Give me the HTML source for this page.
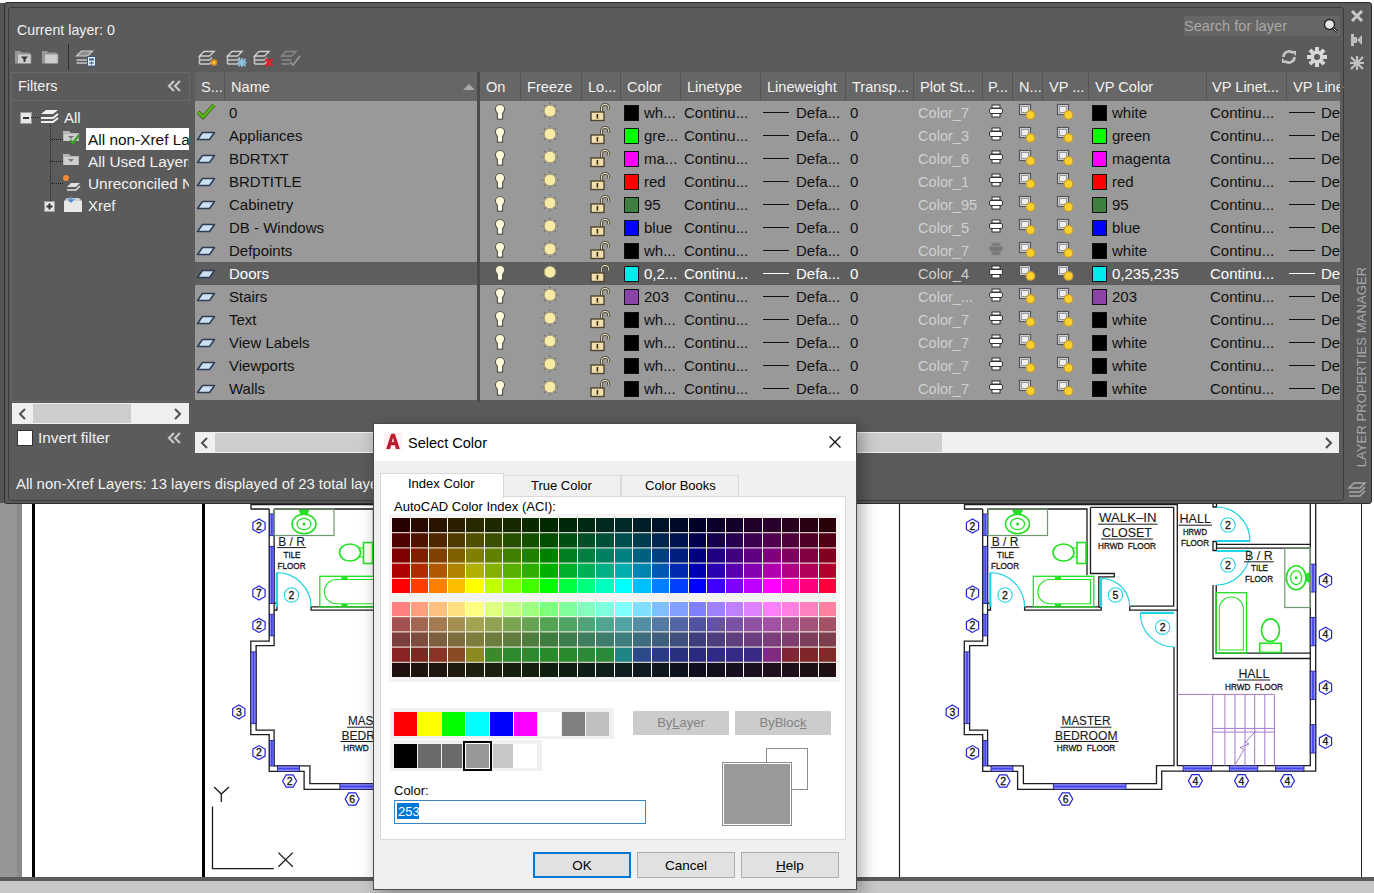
<!DOCTYPE html><html><head><meta charset="utf-8"><style>

*{margin:0;padding:0;box-sizing:border-box}
html,body{width:1374px;height:893px;overflow:hidden;background:#fff;font-family:"Liberation Sans",sans-serif}
.abs{position:absolute}
.t{position:absolute;white-space:nowrap;line-height:1}
svg{overflow:visible}

</style></head><body>
<div class="abs" style="left:0px;top:0px;width:1374px;height:893px;background:#fff;"></div>
<div class="abs" style="left:0px;top:503px;width:22px;height:377px;background:#969696;"></div>
<div class="abs" style="left:17px;top:503px;width:5px;height:377px;background:#8a8a8a;"></div>
<div class="abs" style="left:32px;top:503px;width:3px;height:377px;background:#000;"></div>
<div class="abs" style="left:202px;top:503px;width:3px;height:377px;background:#000;"></div>
<div class="abs" style="left:1361px;top:503px;width:1px;height:377px;background:#222;"></div>
<div class="abs" style="left:0px;top:3px;width:5px;height:500px;background:#555555;"></div>
<svg class="abs" style="left:0;top:0" width="1374" height="893"><defs><clipPath id="clipL"><rect x="205" y="503" width="168" height="374"/></clipPath><clipPath id="clipR"><rect x="857" y="503" width="504" height="374"/></clipPath><g id="plan"><path d="M964.5 503 V509 H982.7" fill="none" stroke="#1c1c1c" stroke-width="1.3"/><path d="M964.5 504.7 H1177.3" fill="none" stroke="#1c1c1c" stroke-width="1.3"/><path d="M982.7 509 V641.2 H964.3 V734.7 H982.7 V771.4 H1017.6 V789.4 H1161.7 V771.1 H1315.7 V503" fill="none" stroke="#1c1c1c" stroke-width="1.3"/><path d="M987.6 509 V645.7 H969.6 V730.2 H987.6 V765.9 H1023.4 V783.7 H1156.5 V765.6 H1174 V646.9" fill="none" stroke="#1c1c1c" stroke-width="1.3"/><path d="M1177.3 503 V765.6 H1310.3 V503" fill="none" stroke="#1c1c1c" stroke-width="1.3"/><path d="M987.6 509 H1087 V575.3" fill="none" stroke="#1c1c1c" stroke-width="1.3"/><path d="M1090.5 507.4 V573.5 H1114.3 V576.9 H1098.8 V607 H1101.2 V610.2 H1024.6 V606.9 H1098.8" fill="none" stroke="#1c1c1c" stroke-width="1.3"/><path d="M1090.5 507.4 H1173.7 V606.2 H1129.7 V610.2 H1177.3" fill="none" stroke="#1c1c1c" stroke-width="1.3"/><path d="M987.6 603 H990.5 V610 H987.6" fill="none" stroke="#1c1c1c" stroke-width="1.3"/><path d="M1213 503 V507 H1216.5 V503" fill="none" stroke="#1c1c1c" stroke-width="1.3"/><path d="M1213 541.5 H1216.5 V550.5 H1213 Z" fill="none" stroke="#1c1c1c" stroke-width="1.3"/><path d="M1216.5 544.4 H1310.3 M1216.5 548.1 H1310.3" fill="none" stroke="#1c1c1c" stroke-width="1.3"/><path d="M1213 585 V658.5 H1310.3 M1216.2 585 V653.1 H1310.3" fill="none" stroke="#1c1c1c" stroke-width="1.3"/><rect x="983" y="514" width="4.6" height="21.6" fill="#8f8ffc" stroke="#24246a" stroke-width="1"/><path d="M985.3 514 V535.6" stroke="#4545ee" stroke-width="1.8"/><rect x="983" y="546.4" width="4.6" height="57.1" fill="#8f8ffc" stroke="#24246a" stroke-width="1"/><path d="M985.3 546.4 V603.5" stroke="#4545ee" stroke-width="1.8"/><rect x="983" y="614.3" width="4.6" height="21.5" fill="#8f8ffc" stroke="#24246a" stroke-width="1"/><path d="M985.3 614.3 V635.8" stroke="#4545ee" stroke-width="1.8"/><rect x="983" y="740.6" width="4.6" height="25.3" fill="#8f8ffc" stroke="#24246a" stroke-width="1"/><path d="M985.3 740.6 V765.9" stroke="#4545ee" stroke-width="1.8"/><rect x="964.3" y="651.9" width="5.3" height="71.7" fill="#8f8ffc" stroke="#24246a" stroke-width="1"/><path d="M967.0 651.9 V723.6" stroke="#4545ee" stroke-width="1.8"/><rect x="991" y="765.9" width="21.9" height="5.5" fill="#8f8ffc" stroke="#24246a" stroke-width="1"/><path d="M991 768.6 H1012.9" stroke="#4545ee" stroke-width="1.8"/><rect x="1053.4" y="783.7" width="72.5" height="5.7" fill="#8f8ffc" stroke="#24246a" stroke-width="1"/><path d="M1053.4 786.5 H1125.9" stroke="#4545ee" stroke-width="1.8"/><rect x="1183.2" y="765.6" width="28.3" height="5.5" fill="#8f8ffc" stroke="#24246a" stroke-width="1"/><path d="M1183.2 768.4 H1211.5" stroke="#4545ee" stroke-width="1.8"/><rect x="1229.4" y="765.6" width="28.3" height="5.5" fill="#8f8ffc" stroke="#24246a" stroke-width="1"/><path d="M1229.4 768.4 H1257.7" stroke="#4545ee" stroke-width="1.8"/><rect x="1275.6" y="765.6" width="28.3" height="5.5" fill="#8f8ffc" stroke="#24246a" stroke-width="1"/><path d="M1275.6 768.4 H1303.9" stroke="#4545ee" stroke-width="1.8"/><rect x="1310.3" y="564.2" width="5.4" height="27.8" fill="#8f8ffc" stroke="#24246a" stroke-width="1"/><path d="M1313.0 564.2 V592" stroke="#4545ee" stroke-width="1.8"/><rect x="1310.3" y="617.5" width="5.4" height="28.2" fill="#8f8ffc" stroke="#24246a" stroke-width="1"/><path d="M1313.0 617.5 V645.7" stroke="#4545ee" stroke-width="1.8"/><rect x="1310.3" y="671.2" width="5.4" height="28.3" fill="#8f8ffc" stroke="#24246a" stroke-width="1"/><path d="M1313.0 671.2 V699.5" stroke="#4545ee" stroke-width="1.8"/><rect x="1310.3" y="724.7" width="5.4" height="28.3" fill="#8f8ffc" stroke="#24246a" stroke-width="1"/><path d="M1313.0 724.7 V753" stroke="#4545ee" stroke-width="1.8"/><path d="M990.3 572.7 V607" fill="none" stroke="#22d3e6" stroke-width="2.2"/><path d="M990.3 572.7 A34.3 34.3 0 0 1 1024.6 607" fill="none" stroke="#22d3e6" stroke-width="1.2"/><path d="M1101 578.3 V607" fill="none" stroke="#22d3e6" stroke-width="2.2"/><path d="M1101 578.3 A28.7 28.7 0 0 1 1129.7 607" fill="none" stroke="#22d3e6" stroke-width="1.2"/><path d="M1140.3 612.9 H1174" fill="none" stroke="#22d3e6" stroke-width="2.2"/><path d="M1140.3 612.9 A33.7 34 0 0 0 1174 646.9" fill="none" stroke="#22d3e6" stroke-width="1.2"/><path d="M1216.5 541 H1250" fill="none" stroke="#22d3e6" stroke-width="2.2"/><path d="M1216.5 507 A33.5 34 0 0 1 1250 541" fill="none" stroke="#22d3e6" stroke-width="1.2"/><path d="M1216.5 551 H1250" fill="none" stroke="#22d3e6" stroke-width="2.2"/><path d="M1250 551 A33.5 34 0 0 1 1216.5 585" fill="none" stroke="#22d3e6" stroke-width="1.2"/><circle cx="1005" cy="595" r="7.2" fill="none" stroke="#22d3e6" stroke-width="1.1"/><text x="1005" y="598.8" font-size="10.5" text-anchor="middle" fill="#111" stroke="#111" stroke-width="0.3">2</text><circle cx="1115.5" cy="595" r="7.2" fill="none" stroke="#22d3e6" stroke-width="1.1"/><text x="1115.5" y="598.8" font-size="10.5" text-anchor="middle" fill="#111" stroke="#111" stroke-width="0.3">5</text><circle cx="1228" cy="525" r="7.2" fill="none" stroke="#22d3e6" stroke-width="1.1"/><text x="1228" y="528.8" font-size="10.5" text-anchor="middle" fill="#111" stroke="#111" stroke-width="0.3">2</text><circle cx="1228" cy="565" r="7.2" fill="none" stroke="#22d3e6" stroke-width="1.1"/><text x="1228" y="568.8" font-size="10.5" text-anchor="middle" fill="#111" stroke="#111" stroke-width="0.3">2</text><circle cx="1162.7" cy="627.2" r="7.2" fill="none" stroke="#22d3e6" stroke-width="1.1"/><text x="1162.7" y="631.0" font-size="10.5" text-anchor="middle" fill="#111" stroke="#111" stroke-width="0.3">2</text><polygon points="972.5,533.0 966.4,529.5 966.4,522.5 972.5,519.0 978.6,522.5 978.6,529.5" fill="none" stroke="#2424d8" stroke-width="1.2"/><text x="972.5" y="529.8" font-size="10.5" text-anchor="middle" fill="#111" stroke="#111" stroke-width="0.3">2</text><polygon points="972.5,600.0 966.4,596.5 966.4,589.5 972.5,586.0 978.6,589.5 978.6,596.5" fill="none" stroke="#2424d8" stroke-width="1.2"/><text x="972.5" y="596.8" font-size="10.5" text-anchor="middle" fill="#111" stroke="#111" stroke-width="0.3">7</text><polygon points="972.5,632.4 966.4,628.9 966.4,621.9 972.5,618.4 978.6,621.9 978.6,628.9" fill="none" stroke="#2424d8" stroke-width="1.2"/><text x="972.5" y="629.1999999999999" font-size="10.5" text-anchor="middle" fill="#111" stroke="#111" stroke-width="0.3">2</text><polygon points="952.3,719.0 946.2,715.5 946.2,708.5 952.3,705.0 958.4,708.5 958.4,715.5" fill="none" stroke="#2424d8" stroke-width="1.2"/><text x="952.3" y="715.8" font-size="10.5" text-anchor="middle" fill="#111" stroke="#111" stroke-width="0.3">3</text><polygon points="972.5,759.6 966.4,756.1 966.4,749.1 972.5,745.6 978.6,749.1 978.6,756.1" fill="none" stroke="#2424d8" stroke-width="1.2"/><text x="972.5" y="756.4" font-size="10.5" text-anchor="middle" fill="#111" stroke="#111" stroke-width="0.3">2</text><polygon points="1325.5,587.4 1319.4,583.9 1319.4,576.9 1325.5,573.4 1331.6,576.9 1331.6,583.9" fill="none" stroke="#2424d8" stroke-width="1.2"/><text x="1325.5" y="584.1999999999999" font-size="10.5" text-anchor="middle" fill="#111" stroke="#111" stroke-width="0.3">4</text><polygon points="1325.5,641.3 1319.4,637.8 1319.4,630.8 1325.5,627.3 1331.6,630.8 1331.6,637.8" fill="none" stroke="#2424d8" stroke-width="1.2"/><text x="1325.5" y="638.0999999999999" font-size="10.5" text-anchor="middle" fill="#111" stroke="#111" stroke-width="0.3">4</text><polygon points="1325.5,694.4 1319.4,690.9 1319.4,683.9 1325.5,680.4 1331.6,683.9 1331.6,690.9" fill="none" stroke="#2424d8" stroke-width="1.2"/><text x="1325.5" y="691.1999999999999" font-size="10.5" text-anchor="middle" fill="#111" stroke="#111" stroke-width="0.3">4</text><polygon points="1325.5,748.4 1319.4,744.9 1319.4,737.9 1325.5,734.4 1331.6,737.9 1331.6,744.9" fill="none" stroke="#2424d8" stroke-width="1.2"/><text x="1325.5" y="745.1999999999999" font-size="10.5" text-anchor="middle" fill="#111" stroke="#111" stroke-width="0.3">4</text><polygon points="1010.1,781.0 1006.6,787.1 999.6,787.1 996.1,781.0 999.6,774.9 1006.6,774.9" fill="none" stroke="#2424d8" stroke-width="1.2"/><text x="1003.1" y="784.8" font-size="10.5" text-anchor="middle" fill="#111" stroke="#111" stroke-width="0.3">2</text><polygon points="1072.7,799.0 1069.2,805.1 1062.2,805.1 1058.7,799.0 1062.2,792.9 1069.2,792.9" fill="none" stroke="#2424d8" stroke-width="1.2"/><text x="1065.7" y="802.8" font-size="10.5" text-anchor="middle" fill="#111" stroke="#111" stroke-width="0.3">6</text><polygon points="1202.4,780.8 1198.9,786.9 1191.9,786.9 1188.4,780.8 1191.9,774.7 1198.9,774.7" fill="none" stroke="#2424d8" stroke-width="1.2"/><text x="1195.4" y="784.5999999999999" font-size="10.5" text-anchor="middle" fill="#111" stroke="#111" stroke-width="0.3">4</text><polygon points="1248.5,780.8 1245.0,786.9 1238.0,786.9 1234.5,780.8 1238.0,774.7 1245.0,774.7" fill="none" stroke="#2424d8" stroke-width="1.2"/><text x="1241.5" y="784.5999999999999" font-size="10.5" text-anchor="middle" fill="#111" stroke="#111" stroke-width="0.3">4</text><polygon points="1294.5,780.8 1291.0,786.9 1284.0,786.9 1280.5,780.8 1284.0,774.7 1291.0,774.7" fill="none" stroke="#2424d8" stroke-width="1.2"/><text x="1287.5" y="784.5999999999999" font-size="10.5" text-anchor="middle" fill="#111" stroke="#111" stroke-width="0.3">4</text><rect x="988" y="509" width="59.5" height="26.5" fill="none" stroke="#6f9a6f" stroke-width="1.2"/><ellipse cx="1017.5" cy="524" rx="12" ry="9.8" fill="none" stroke="#22e022" stroke-width="1.6"/><ellipse cx="1017.5" cy="524" rx="7" ry="5.6" fill="none" stroke="#22e022" stroke-width="1.2"/><circle cx="1017.5" cy="524" r="1.5" fill="#22e022"/><path d="M1012 510 h11 l-2 4 h-7z" fill="#22e022"/><ellipse cx="1063.5" cy="552.5" rx="10.5" ry="8.5" fill="none" stroke="#22e022" stroke-width="1.6"/><path d="M1072 548 h5 M1072 557 h5" stroke="#22e022" stroke-width="1.2"/><rect x="1077" y="542.5" width="9" height="21" fill="none" stroke="#22e022" stroke-width="1.6"/><rect x="1033.3" y="576.3" width="60.5" height="30.6" fill="none" stroke="#22e022" stroke-width="1.3"/><path d="M1050 579.5 H1090.5 V603.8 H1050 A12.15 12.15 0 0 1 1050 579.5Z" fill="none" stroke="#22e022" stroke-width="1.1"/><path d="M1055 578 h6 M1055 605 h6" stroke="#22e022" stroke-width="2"/><rect x="1284.8" y="548" width="25.5" height="59.5" fill="none" stroke="#6f9a6f" stroke-width="1.2"/><ellipse cx="1296.2" cy="577.7" rx="9.8" ry="12" fill="none" stroke="#22e022" stroke-width="1.6"/><ellipse cx="1296.2" cy="577.7" rx="5.6" ry="7" fill="none" stroke="#22e022" stroke-width="1.2"/><circle cx="1296.2" cy="577.7" r="1.5" fill="#22e022"/><path d="M1309.5 572 v11 l-4 -2 v-7z" fill="#22e022"/><rect x="1216.2" y="592.7" width="30.3" height="60.4" fill="none" stroke="#22e022" stroke-width="1.3"/><path d="M1219.3 650 V609 A12.05 12.05 0 0 1 1243.4 609 V650Z" fill="none" stroke="#22e022" stroke-width="1.1"/><ellipse cx="1270.5" cy="630.2" rx="9" ry="11.3" fill="none" stroke="#22e022" stroke-width="1.6"/><rect x="1259.7" y="643.3" width="21.5" height="9.1" fill="none" stroke="#22e022" stroke-width="1.6"/><path d="M1177.3 694.4 H1274.4" fill="none" stroke="#a678c8" stroke-width="1"/><path d="M1212.7 694.4 V765.6" fill="none" stroke="#a678c8" stroke-width="1"/><path d="M1224.9 694.4 V765.6" fill="none" stroke="#a678c8" stroke-width="1"/><path d="M1235 694.4 V765.6" fill="none" stroke="#a678c8" stroke-width="1"/><path d="M1245 694.4 V765.6" fill="none" stroke="#a678c8" stroke-width="1"/><path d="M1254.7 694.4 V765.6" fill="none" stroke="#a678c8" stroke-width="1"/><path d="M1264.8 694.4 V765.6" fill="none" stroke="#a678c8" stroke-width="1"/><path d="M1274.4 694.4 V765.6" fill="none" stroke="#a678c8" stroke-width="1"/><path d="M1212.7 728.4 H1274.4 M1212.7 732.1 H1274.4" fill="none" stroke="#a678c8" stroke-width="1"/><path d="M1234.6 765.6 L1244 749.5 L1240 747.5 L1249 744 L1245.5 742 L1256.2 730.6" fill="none" stroke="#a678c8" stroke-width="1"/><text x="991.7" y="545.7" font-size="12.5" textLength="26.8" lengthAdjust="spacingAndGlyphs" fill="#1a1a1a" stroke="#1a1a1a" stroke-width="0.1">B / R</text><line x1="990.7" y1="547.6" x2="1019.5" y2="547.6" stroke="#1a1a1a" stroke-width="1"/><text x="997" y="557.8" font-size="9.8" textLength="17.0" lengthAdjust="spacingAndGlyphs" fill="#1a1a1a" stroke="#1a1a1a" stroke-width="0.35">TILE</text><text x="991" y="568.5" font-size="9.8" textLength="28.0" lengthAdjust="spacingAndGlyphs" fill="#1a1a1a" stroke="#1a1a1a" stroke-width="0.35">FLOOR</text><text x="1099" y="522.2" font-size="12.5" textLength="57.6" lengthAdjust="spacingAndGlyphs" fill="#1a1a1a" stroke="#1a1a1a" stroke-width="0.1">WALK–IN</text><line x1="1098" y1="524.2" x2="1157.6" y2="524.2" stroke="#1a1a1a" stroke-width="1"/><text x="1102" y="537" font-size="12.5" textLength="50.0" lengthAdjust="spacingAndGlyphs" fill="#1a1a1a" stroke="#1a1a1a" stroke-width="0.1">CLOSET</text><line x1="1101" y1="539" x2="1153" y2="539" stroke="#1a1a1a" stroke-width="1"/><text x="1098" y="548.7" font-size="9.8" textLength="58.0" lengthAdjust="spacingAndGlyphs" fill="#1a1a1a" stroke="#1a1a1a" stroke-width="0.35">HRWD&#160;&#160;FLOOR</text><text x="1179.5" y="523.4" font-size="12.5" textLength="31.5" lengthAdjust="spacingAndGlyphs" fill="#1a1a1a" stroke="#1a1a1a" stroke-width="0.1">HALL</text><line x1="1178.5" y1="525.2" x2="1212" y2="525.2" stroke="#1a1a1a" stroke-width="1"/><text x="1183" y="534.7" font-size="9.8" textLength="24.0" lengthAdjust="spacingAndGlyphs" fill="#1a1a1a" stroke="#1a1a1a" stroke-width="0.35">HRWD</text><text x="1181" y="545.7" font-size="9.8" textLength="28.0" lengthAdjust="spacingAndGlyphs" fill="#1a1a1a" stroke="#1a1a1a" stroke-width="0.35">FLOOR</text><text x="1245" y="559.8" font-size="12.5" textLength="27.7" lengthAdjust="spacingAndGlyphs" fill="#1a1a1a" stroke="#1a1a1a" stroke-width="0.1">B / R</text><line x1="1244" y1="561.8" x2="1273.7" y2="561.8" stroke="#1a1a1a" stroke-width="1"/><text x="1251" y="571.2" font-size="9.8" textLength="17.0" lengthAdjust="spacingAndGlyphs" fill="#1a1a1a" stroke="#1a1a1a" stroke-width="0.35">TILE</text><text x="1245" y="582.3" font-size="9.8" textLength="28.0" lengthAdjust="spacingAndGlyphs" fill="#1a1a1a" stroke="#1a1a1a" stroke-width="0.35">FLOOR</text><text x="1238.4" y="678" font-size="12.5" textLength="30.9" lengthAdjust="spacingAndGlyphs" fill="#1a1a1a" stroke="#1a1a1a" stroke-width="0.1">HALL</text><line x1="1237.4" y1="680" x2="1270.3" y2="680" stroke="#1a1a1a" stroke-width="1"/><text x="1225" y="689.8" font-size="9.8" textLength="58.0" lengthAdjust="spacingAndGlyphs" fill="#1a1a1a" stroke="#1a1a1a" stroke-width="0.35">HRWD&#160;&#160;FLOOR</text><text x="1061.5" y="725.4" font-size="12.5" textLength="48.9" lengthAdjust="spacingAndGlyphs" fill="#1a1a1a" stroke="#1a1a1a" stroke-width="0.1">MASTER</text><line x1="1060.5" y1="727.2" x2="1111.4" y2="727.2" stroke="#1a1a1a" stroke-width="1"/><text x="1054.9" y="739.7" font-size="12.5" textLength="62.7" lengthAdjust="spacingAndGlyphs" fill="#1a1a1a" stroke="#1a1a1a" stroke-width="0.1">BEDROOM</text><line x1="1053.9" y1="741.5" x2="1118.6" y2="741.5" stroke="#1a1a1a" stroke-width="1"/><text x="1056.7" y="751.3" font-size="9.8" textLength="58.6" lengthAdjust="spacingAndGlyphs" fill="#1a1a1a" stroke="#1a1a1a" stroke-width="0.35">HRWD&#160;&#160;FLOOR</text></g></defs><g clip-path="url(#clipR)"><use href="#plan"/></g><g clip-path="url(#clipL)"><use href="#plan" transform="translate(-713.5 0)"/></g><path d="M899.5 503 V877" stroke="#222" stroke-width="1.2"/><path d="M212.5 806.6 V868.6 H273.7" fill="none" stroke="#1a1a1a" stroke-width="1.3"/><path d="M214.1 787 L221.3 794 L229 787 M221.3 794 V801.9" fill="none" stroke="#1a1a1a" stroke-width="1.3"/><path d="M278.4 852.6 L292.8 866.7 M292.8 852.6 L278.4 866.7" fill="none" stroke="#1a1a1a" stroke-width="1.3"/></svg>
<div class="abs" style="left:0px;top:877px;width:1374px;height:4px;background:#5a5a5a;"></div>
<div class="abs" style="left:0px;top:881px;width:1374px;height:12px;background:#c8c8c8;"></div>
<div class="abs" style="left:4px;top:2px;width:1368px;height:502px;background:#5a5a5a;border:1px solid #2e2e2e;border-radius:3px"></div>
<div class="abs" style="left:8px;top:7px;width:1336px;height:494px;background:#5b5b5b;border:1px solid #3a3a3a;border-radius:3px"></div>
<div class="t" style="left:17px;top:23.1px;font-size:14.2px;color:#f2f2f2;">Current layer: 0</div>
<div class="abs" style="left:1184px;top:16px;width:156px;height:20px;background:#666666;"></div>
<div class="t" style="left:1184px;top:18.8px;font-size:14.6px;color:#a8a8a8;">Search for layer</div>
<svg class="abs" style="left:1323px;top:18px;" width="16" height="16" viewBox="0 0 16 16"><circle cx="6.5" cy="6.5" r="5" fill="#e8e8e8" stroke="#222" stroke-width="1.3"/><line x1="10" y1="10" x2="14" y2="14" stroke="#222" stroke-width="2.5"/><line x1="10.5" y1="10.5" x2="13.5" y2="13.5" stroke="#ddd" stroke-width="1"/></svg>
<svg class="abs" style="left:14px;top:49px;" width="20" height="16" viewBox="0 0 20 16"><path d="M1 2 h5 l1.5 1.5 h8 v11 h-14.5z" fill="#9a9a9a"/><path d="M3.5 5 h13.5 v9.5 h-13.5z" fill="#cdcdcd" stroke="#8a8a8a" stroke-width="0.8"/><path d="M7 7.5 h7 l-2.5 3 v2.5 h-2 v-2.5z" fill="#3a3a3a"/></svg>
<svg class="abs" style="left:41px;top:49px;" width="20" height="16" viewBox="0 0 20 16"><path d="M1 2 h5 l1.5 1.5 h8 v11 h-14.5z" fill="#9a9a9a"/><path d="M3.5 5 h13.5 v9.5 h-13.5z" fill="#cdcdcd" stroke="#8a8a8a" stroke-width="0.8"/></svg>
<div class="abs" style="left:68px;top:44px;width:1px;height:26px;background:#2e2e2e;"></div>
<svg class="abs" style="left:75px;top:49px;" width="22" height="18" viewBox="0 0 22 18"><path d="M1.5 7 l5 -5 h11 l-5 5z" fill="#8a8a8a" stroke="#cfcfcf" stroke-width="1.2"/><path d="M1.5 11 h11 l4 -4 M1.5 14 h11" fill="none" stroke="#c8c8c8" stroke-width="1.4"/><rect x="12.5" y="7.5" width="8" height="9.5" fill="#e8eef6" stroke="#3a5a8a" stroke-width="1"/><rect x="14" y="9.5" width="5" height="2" fill="#3a5a8a"/><path d="M14 14 h5 M16.5 12.5 v3" stroke="#3a5a8a" stroke-width="1"/></svg>
<svg class="abs" style="left:198px;top:50px;" width="22" height="18" viewBox="0 0 22 18"><path d="M1.5 6 l4.5 -4.5 h10 l-4.5 4.5z" fill="#4f4f4f" stroke="#d0d0d0" stroke-width="1.4"/><path d="M1.5 6 v8 M1.5 10 h10 l2.5 -2.5 M1.5 14 h10 l2.5 -2.5" fill="none" stroke="#c8c8c8" stroke-width="1.5"/><circle cx="16" cy="12.5" r="3.2" fill="#e88a20"/><circle cx="16" cy="12.5" r="1.5" fill="#ffd040"/></svg>
<svg class="abs" style="left:226px;top:50px;" width="22" height="18" viewBox="0 0 22 18"><path d="M1.5 6 l4.5 -4.5 h10 l-4.5 4.5z" fill="#4f4f4f" stroke="#d0d0d0" stroke-width="1.4"/><path d="M1.5 6 v8 M1.5 10 h10 l2.5 -2.5 M1.5 14 h10 l2.5 -2.5" fill="none" stroke="#c8c8c8" stroke-width="1.5"/><path d="M12.5 9 l7 7 M19.5 9 l-7 7 M16 8 v9 M11.5 12.5 h9" stroke="#8cc0dc" stroke-width="1.8"/></svg>
<svg class="abs" style="left:253px;top:50px;" width="22" height="18" viewBox="0 0 22 18"><path d="M1.5 6 l4.5 -4.5 h10 l-4.5 4.5z" fill="#4f4f4f" stroke="#d0d0d0" stroke-width="1.4"/><path d="M1.5 6 v8 M1.5 10 h10 l2.5 -2.5 M1.5 14 h10 l2.5 -2.5" fill="none" stroke="#c8c8c8" stroke-width="1.5"/><path d="M12.5 9 l7 7 M19.5 9 l-7 7" stroke="#e82030" stroke-width="2.6"/></svg>
<svg class="abs" style="left:280px;top:50px;" width="22" height="18" viewBox="0 0 22 18"><path d="M1.5 6 l4.5 -4.5 h10 l-4.5 4.5z M1.5 10 h10 M1.5 14 h8" fill="none" stroke="#8a8a8a" stroke-width="1.3"/><path d="M10 12 l3 3 l7 -9" fill="none" stroke="#9a9a9a" stroke-width="1.6"/></svg>
<svg class="abs" style="left:1280px;top:48px;" width="18" height="18" viewBox="0 0 18 18"><path d="M3.5 9 a5.5 5.5 0 0 1 9.5 -3.8" fill="none" stroke="#c4c4c4" stroke-width="2.6"/><path d="M14.5 9 a5.5 5.5 0 0 1 -9.5 3.8" fill="none" stroke="#c4c4c4" stroke-width="2.6"/><path d="M11 3 h5 v5z" fill="#c4c4c4"/><path d="M7 15 h-5 v-5z" fill="#c4c4c4"/></svg>
<svg class="abs" style="left:1307px;top:47px;" width="20" height="20" viewBox="0 0 20 20"><rect x="8" y="0" width="4" height="20" fill="#d8d8d8" transform="rotate(0 10 10)"/><rect x="8" y="0" width="4" height="20" fill="#d8d8d8" transform="rotate(45 10 10)"/><rect x="8" y="0" width="4" height="20" fill="#d8d8d8" transform="rotate(90 10 10)"/><rect x="8" y="0" width="4" height="20" fill="#d8d8d8" transform="rotate(135 10 10)"/><circle cx="10" cy="10" r="6.5" fill="#d8d8d8"/><circle cx="10" cy="10" r="3" fill="#5b5b5b"/></svg>
<svg class="abs" style="left:1350px;top:9px;" width="14" height="14" viewBox="0 0 14 14"><path d="M2 2 L12 12 M12 2 L2 12" stroke="#c8c8c8" stroke-width="3"/></svg>
<svg class="abs" style="left:1351px;top:33px;" width="12" height="14" viewBox="0 0 12 14"><rect x="0" y="1" width="3" height="12" fill="#bdbdbd"/><rect x="3" y="4" width="3" height="6" fill="#bdbdbd"/><path d="M11 2 v10 l-5 -5z" fill="#bdbdbd"/></svg>
<svg class="abs" style="left:1350px;top:56px;" width="14" height="14" viewBox="0 0 14 14"><path d="M1 1 L13 13 M13 1 L1 13 M7 0 V14 M0 7 H14" stroke="#c0c0c0" stroke-width="2.2"/><circle cx="7" cy="7" r="3" fill="#c0c0c0"/></svg>
<div class="t" style="left:1361px;top:367px;font-size:13px;color:#a9a9a9;transform:translate(-50%,-50%) rotate(-90deg);letter-spacing:0.1px">LAYER PROPERTIES MANAGER</div>
<svg class="abs" style="left:1347px;top:481px;" width="20" height="18" viewBox="0 0 20 18"><path d="M2 7 l5 -5 h11 l-5 5z" fill="none" stroke="#a8a8a8" stroke-width="1.5"/><path d="M2 11 h11 l5 -5" fill="none" stroke="#a8a8a8" stroke-width="1.5"/><path d="M2 15 h11 l5 -5" fill="none" stroke="#a8a8a8" stroke-width="1.5"/></svg>
<div class="abs" style="left:11px;top:72px;width:179px;height:29px;background:transparent;border:1px solid #686868"></div>
<div class="t" style="left:18px;top:78.9px;font-size:14.5px;color:#f2f2f2;">Filters</div>
<svg class="abs" style="left:168px;top:80px;" width="14" height="12" viewBox="0 0 14 12"><path d="M6 1 L1 6 L6 11 M12 1 L7 6 L12 11" fill="none" stroke="#c8c8c8" stroke-width="2.2"/></svg>
<div class="abs" style="left:11px;top:100px;width:179px;height:302px;background:transparent;border:1px solid #686868"></div>
<svg class="abs" style="left:20px;top:112px;" width="12" height="12" viewBox="0 0 12 12"><rect x="0.5" y="0.5" width="11" height="11" fill="#e6e6e6" stroke="#9a9a9a"/><rect x="3" y="5" width="6" height="2" fill="#333"/></svg>
<div class="abs" style="left:31px;top:117px;width:9px;border-top:1px dotted #222"></div>
<svg class="abs" style="left:40px;top:109px;" width="19" height="16" viewBox="0 0 19 16"><path d="M1 5 l5 -4 h12 l-5 4z" fill="#f0f0f0"/><path d="M1 9 h12 l5 -4" fill="none" stroke="#f0f0f0" stroke-width="2"/><path d="M1 13 h12 l5 -4" fill="none" stroke="#f0f0f0" stroke-width="2"/></svg>
<div class="t" style="left:64px;top:110.4px;font-size:15px;color:#f2f2f2;">All</div>
<div class="abs" style="left:50px;top:125px;height:82px;border-left:1px dotted #222"></div>
<div class="abs" style="left:51px;top:139px;width:12px;border-top:1px dotted #222"></div>
<div class="abs" style="left:51px;top:161px;width:12px;border-top:1px dotted #222"></div>
<div class="abs" style="left:51px;top:183px;width:12px;border-top:1px dotted #222"></div>
<svg class="abs" style="left:62px;top:128px;" width="20" height="18" viewBox="0 0 20 18"><path d="M1 3 h6 l2 2 h8 v8 h-16z" fill="#b5b5b5"/><path d="M2 6 h14 v7 h-14z" fill="#cfcfcf"/><path d="M6 8 h6 l-3 3z" fill="#777"/><path d="M8 12 l3 3 l6 -8" fill="none" stroke="#3fa028" stroke-width="2.4"/></svg>
<div class="abs" style="left:86px;top:128px;width:103px;height:22px;background:#fff;overflow:hidden"><div class="t" style="left:2px;top:4.4px;font-size:15.4px;color:#111">All non-Xref Layers</div></div>
<svg class="abs" style="left:62px;top:151px;" width="20" height="16" viewBox="0 0 20 16"><path d="M1 3 h6 l2 2 h8 v9 h-16z" fill="#b5b5b5"/><path d="M2 6 h14 v8 h-14z" fill="#cfcfcf"/><path d="M6 8 h6 l-3 3z" fill="#777"/></svg>
<div class="abs" style="left:86px;top:150px;width:103px;height:22px;overflow:hidden"><div class="t" style="left:2px;top:4.4px;font-size:15.4px;color:#f2f2f2">All Used Layers</div></div>
<svg class="abs" style="left:62px;top:174px;" width="20" height="18" viewBox="0 0 20 18"><circle cx="4" cy="4" r="3" fill="#f08a30"/><path d="M5 13 l4 -4 h9 l-4 4z" fill="#e0e0e0"/><path d="M5 16 h9 l4 -4" fill="none" stroke="#e0e0e0" stroke-width="1.5"/></svg>
<div class="abs" style="left:86px;top:172px;width:103px;height:22px;overflow:hidden"><div class="t" style="left:2px;top:4.4px;font-size:15.4px;color:#f2f2f2">Unreconciled New Layers</div></div>
<svg class="abs" style="left:44px;top:201px;" width="12" height="12" viewBox="0 0 12 12"><rect x="0.5" y="0.5" width="10" height="10" fill="#e6e6e6" stroke="#9a9a9a"/><rect x="2.5" y="4.5" width="6" height="2" fill="#333"/><rect x="4.5" y="2.5" width="2" height="6" fill="#333"/></svg>
<svg class="abs" style="left:63px;top:195px;" width="20" height="18" viewBox="0 0 20 18"><path d="M1 6 h18 v11 h-18z" fill="#e8e8e8"/><path d="M1 6 l3 -3 h12 l3 3" fill="#cfcfcf"/><path d="M8 1 v6 M5 4 l3 3 l3 -3" fill="none" stroke="#4a8ad0" stroke-width="1.5"/></svg>
<div class="t" style="left:88px;top:198.4px;font-size:15px;color:#f2f2f2;">Xref</div>
<div class="abs" style="left:189px;top:101px;width:6px;height:330px;background:#5b5b5b;"></div>
<div class="abs" style="left:12px;top:403px;width:177px;height:21px;background:#f0f0f0;"></div>
<div class="abs" style="left:33px;top:404px;width:98px;height:19px;background:#cdcdcd;"></div>
<svg class="abs" style="left:17px;top:408px;" width="10" height="12" viewBox="0 0 10 12"><path d="M8 1 L3 6 L8 11" fill="none" stroke="#505050" stroke-width="2"/></svg>
<svg class="abs" style="left:173px;top:408px;" width="10" height="12" viewBox="0 0 10 12"><path d="M2 1 L7 6 L2 11" fill="none" stroke="#505050" stroke-width="2"/></svg>
<div class="abs" style="left:17px;top:430px;width:16px;height:16px;background:#ffffff;border:1px solid #333"></div>
<div class="t" style="left:38px;top:430.1px;font-size:15.4px;color:#f2f2f2;">Invert filter</div>
<svg class="abs" style="left:168px;top:432px;" width="14" height="12" viewBox="0 0 14 12"><path d="M6 1 L1 6 L6 11 M12 1 L7 6 L12 11" fill="none" stroke="#c8c8c8" stroke-width="2.2"/></svg>
<div class="abs" style="left:195px;top:72px;width:1145px;height:29px;background:#666666;"></div>
<div class="abs" style="left:224px;top:72px;width:1px;height:29px;background:#545454;"></div>
<div class="abs" style="left:520px;top:72px;width:1px;height:29px;background:#545454;"></div>
<div class="abs" style="left:581px;top:72px;width:1px;height:29px;background:#545454;"></div>
<div class="abs" style="left:620px;top:72px;width:1px;height:29px;background:#545454;"></div>
<div class="abs" style="left:680px;top:72px;width:1px;height:29px;background:#545454;"></div>
<div class="abs" style="left:760px;top:72px;width:1px;height:29px;background:#545454;"></div>
<div class="abs" style="left:845px;top:72px;width:1px;height:29px;background:#545454;"></div>
<div class="abs" style="left:913px;top:72px;width:1px;height:29px;background:#545454;"></div>
<div class="abs" style="left:982px;top:72px;width:1px;height:29px;background:#545454;"></div>
<div class="abs" style="left:1012px;top:72px;width:1px;height:29px;background:#545454;"></div>
<div class="abs" style="left:1042px;top:72px;width:1px;height:29px;background:#545454;"></div>
<div class="abs" style="left:1088px;top:72px;width:1px;height:29px;background:#545454;"></div>
<div class="abs" style="left:1206px;top:72px;width:1px;height:29px;background:#545454;"></div>
<div class="abs" style="left:1286px;top:72px;width:1px;height:29px;background:#545454;"></div>
<div class="abs" style="left:477px;top:72px;width:3px;height:330px;background:#4a4a4a;"></div>
<div class="t" style="left:201px;top:79.8px;font-size:14.6px;color:#f2f2f2;">S...</div>
<div class="t" style="left:231px;top:79.8px;font-size:14.6px;color:#f2f2f2;">Name</div>
<div class="t" style="left:486px;top:79.8px;font-size:14.6px;color:#f2f2f2;">On</div>
<div class="t" style="left:527px;top:79.8px;font-size:14.6px;color:#f2f2f2;">Freeze</div>
<div class="t" style="left:588px;top:79.8px;font-size:14.6px;color:#f2f2f2;">Lo...</div>
<div class="t" style="left:627px;top:79.8px;font-size:14.6px;color:#f2f2f2;">Color</div>
<div class="t" style="left:687px;top:79.8px;font-size:14.6px;color:#f2f2f2;">Linetype</div>
<div class="t" style="left:767px;top:79.8px;font-size:14.6px;color:#f2f2f2;">Lineweight</div>
<div class="t" style="left:852px;top:79.8px;font-size:14.6px;color:#f2f2f2;">Transp...</div>
<div class="t" style="left:920px;top:79.8px;font-size:14.6px;color:#f2f2f2;">Plot St...</div>
<div class="t" style="left:988px;top:79.8px;font-size:14.6px;color:#f2f2f2;">P...</div>
<div class="t" style="left:1019px;top:79.8px;font-size:14.6px;color:#f2f2f2;">N...</div>
<div class="t" style="left:1049px;top:79.8px;font-size:14.6px;color:#f2f2f2;">VP ...</div>
<div class="t" style="left:1095px;top:79.8px;font-size:14.6px;color:#f2f2f2;">VP Color</div>
<div class="t" style="left:1212px;top:79.8px;font-size:14.6px;color:#f2f2f2;">VP Linet...</div>
<div class="t" style="left:1293px;top:79.8px;font-size:14.6px;color:#f2f2f2;">VP Line</div>
<svg class="abs" style="left:463px;top:84px;" width="12" height="7" viewBox="0 0 12 7"><path d="M0 6 L6 0 L12 6z" fill="#a8a8a8"/></svg>
<div class="abs" style="left:195px;top:101px;width:282px;height:299px;background:#999999;"></div>
<div class="abs" style="left:480px;top:101px;width:860px;height:299px;background:#999999;"></div>
<svg class="abs" style="left:196px;top:103px;" width="20" height="17" viewBox="0 0 20 17"><path d="M2 9 L7 14 L18 2" fill="none" stroke="#3a6a10" stroke-width="4"/><path d="M2 9 L7 14 L18 2" fill="none" stroke="#5cb820" stroke-width="2.4"/></svg>
<div class="t" style="left:229px;top:105.4px;font-size:15px;color:#111111;">0</div>
<svg class="abs" style="left:494px;top:103px;" width="12" height="18" viewBox="0 0 12 18"><path d="M6 1.5 a4.6 4.6 0 0 1 4.6 4.6 c0 2.2 -1.3 3.2 -2 4.5 v5.5 h-5.2 v-5.5 c-0.7 -1.3 -2 -2.3 -2 -4.5 a4.6 4.6 0 0 1 4.6 -4.6z" fill="#fcf8d8" stroke="#55554a" stroke-width="1.1"/><rect x="5.2" y="11" width="1.8" height="4.5" fill="#fff"/></svg>
<svg class="abs" style="left:541px;top:102px;" width="18" height="18" viewBox="0 0 18 18"><g fill="#6f6c5c"><circle cx="16.6" cy="9.0" r="0.8"/><circle cx="14.4" cy="14.4" r="0.8"/><circle cx="9.0" cy="16.6" r="0.8"/><circle cx="3.6" cy="14.4" r="0.8"/><circle cx="1.4" cy="9.0" r="0.8"/><circle cx="3.6" cy="3.6" r="0.8"/><circle cx="9.0" cy="1.4" r="0.8"/><circle cx="14.4" cy="3.6" r="0.8"/></g><circle cx="9" cy="9" r="5.8" fill="#f7eba8" stroke="#a89c70" stroke-width="1"/></svg>
<svg class="abs" style="left:590px;top:103px;" width="21" height="18" viewBox="0 0 21 18"><path d="M11.5 9 V5 a3.6 3.6 0 0 1 7.2 0 V6.5" fill="none" stroke="#4a4232" stroke-width="2.8"/><path d="M11.5 9 V5 a3.6 3.6 0 0 1 7.2 0 V6.5" fill="none" stroke="#ddd6bc" stroke-width="1.1"/><rect x="1" y="9" width="13" height="8.5" fill="#f2dfae" stroke="#4f4530" stroke-width="1.4"/><rect x="6.6" y="11" width="1.6" height="4.6" fill="#3a2a10"/></svg>
<div class="abs" style="left:624px;top:105px;width:15px;height:16px;background:#000;border:1px solid #111"></div>
<div class="t" style="left:644px;top:105.4px;font-size:15px;color:#111111;">wh...</div>
<div class="t" style="left:684px;top:105.4px;font-size:15px;color:#111111;">Continu...</div>
<div class="abs" style="left:763px;top:112px;width:26px;height:1px;background:#111;"></div>
<div class="t" style="left:796px;top:105.4px;font-size:15px;color:#111111;">Defa...</div>
<div class="t" style="left:850px;top:105.4px;font-size:15px;color:#111111;">0</div>
<div class="t" style="left:918px;top:105.8px;font-size:14.6px;color:#d0d0d0;">Color_7</div>
<svg class="abs" style="left:989px;top:104px;" width="14" height="14" viewBox="0 0 14 14"><rect x="3" y="1" width="8" height="3" fill="#fff" stroke="#333" stroke-width="1"/><rect x="0.5" y="4.5" width="13" height="5" rx="1.5" fill="#fff" stroke="#333" stroke-width="1"/><rect x="3" y="9.5" width="8" height="3.5" fill="#fff" stroke="#333" stroke-width="1"/></svg>
<svg class="abs" style="left:1018px;top:103px;" width="20" height="18" viewBox="0 0 20 18"><rect x="1.5" y="1.5" width="11" height="10" fill="#d8d8e8" stroke="#555" stroke-width="1.2"/><rect x="3.5" y="3.5" width="7" height="6" fill="#eee" stroke="#888" stroke-width="0.8"/><circle cx="12.5" cy="12" r="5" fill="#c89a30"/><circle cx="12.5" cy="12" r="3.8" fill="#f8d030"/></svg>
<svg class="abs" style="left:1056px;top:103px;" width="20" height="18" viewBox="0 0 20 18"><rect x="1.5" y="1.5" width="11" height="10" fill="#d8d8e8" stroke="#555" stroke-width="1.2"/><rect x="3.5" y="3.5" width="7" height="6" fill="#eee" stroke="#888" stroke-width="0.8"/><circle cx="12.5" cy="12" r="5" fill="#c89a30"/><circle cx="12.5" cy="12" r="3.8" fill="#f8d030"/></svg>
<div class="abs" style="left:1092px;top:105px;width:15px;height:16px;background:#000;border:1px solid #111"></div>
<div class="t" style="left:1112px;top:105.4px;font-size:15px;color:#111111;">white</div>
<div class="t" style="left:1210px;top:105.4px;font-size:15px;color:#111111;">Continu...</div>
<div class="abs" style="left:1289px;top:112px;width:26px;height:1px;background:#111;"></div>
<div class="t" style="left:1321px;top:105.4px;font-size:15px;color:#111111;">De</div>
<svg class="abs" style="left:196px;top:131px;" width="20" height="10" viewBox="0 0 20 10"><path d="M1.5 8.5 L6.5 1.5 H18.5 L13.5 8.5Z" fill="#cde0f2" stroke="#2f3e55" stroke-width="1.6" stroke-linejoin="round"/></svg>
<div class="t" style="left:229px;top:128.4px;font-size:15px;color:#111111;">Appliances</div>
<svg class="abs" style="left:494px;top:126px;" width="12" height="18" viewBox="0 0 12 18"><path d="M6 1.5 a4.6 4.6 0 0 1 4.6 4.6 c0 2.2 -1.3 3.2 -2 4.5 v5.5 h-5.2 v-5.5 c-0.7 -1.3 -2 -2.3 -2 -4.5 a4.6 4.6 0 0 1 4.6 -4.6z" fill="#fcf8d8" stroke="#55554a" stroke-width="1.1"/><rect x="5.2" y="11" width="1.8" height="4.5" fill="#fff"/></svg>
<svg class="abs" style="left:541px;top:125px;" width="18" height="18" viewBox="0 0 18 18"><g fill="#6f6c5c"><circle cx="16.6" cy="9.0" r="0.8"/><circle cx="14.4" cy="14.4" r="0.8"/><circle cx="9.0" cy="16.6" r="0.8"/><circle cx="3.6" cy="14.4" r="0.8"/><circle cx="1.4" cy="9.0" r="0.8"/><circle cx="3.6" cy="3.6" r="0.8"/><circle cx="9.0" cy="1.4" r="0.8"/><circle cx="14.4" cy="3.6" r="0.8"/></g><circle cx="9" cy="9" r="5.8" fill="#f7eba8" stroke="#a89c70" stroke-width="1"/></svg>
<svg class="abs" style="left:590px;top:126px;" width="21" height="18" viewBox="0 0 21 18"><path d="M11.5 9 V5 a3.6 3.6 0 0 1 7.2 0 V6.5" fill="none" stroke="#4a4232" stroke-width="2.8"/><path d="M11.5 9 V5 a3.6 3.6 0 0 1 7.2 0 V6.5" fill="none" stroke="#ddd6bc" stroke-width="1.1"/><rect x="1" y="9" width="13" height="8.5" fill="#f2dfae" stroke="#4f4530" stroke-width="1.4"/><rect x="6.6" y="11" width="1.6" height="4.6" fill="#3a2a10"/></svg>
<div class="abs" style="left:624px;top:128px;width:15px;height:16px;background:#00ff00;border:1px solid #111"></div>
<div class="t" style="left:644px;top:128.4px;font-size:15px;color:#111111;">gre...</div>
<div class="t" style="left:684px;top:128.4px;font-size:15px;color:#111111;">Continu...</div>
<div class="abs" style="left:763px;top:135px;width:26px;height:1px;background:#111;"></div>
<div class="t" style="left:796px;top:128.4px;font-size:15px;color:#111111;">Defa...</div>
<div class="t" style="left:850px;top:128.4px;font-size:15px;color:#111111;">0</div>
<div class="t" style="left:918px;top:128.8px;font-size:14.6px;color:#d0d0d0;">Color_3</div>
<svg class="abs" style="left:989px;top:127px;" width="14" height="14" viewBox="0 0 14 14"><rect x="3" y="1" width="8" height="3" fill="#fff" stroke="#333" stroke-width="1"/><rect x="0.5" y="4.5" width="13" height="5" rx="1.5" fill="#fff" stroke="#333" stroke-width="1"/><rect x="3" y="9.5" width="8" height="3.5" fill="#fff" stroke="#333" stroke-width="1"/></svg>
<svg class="abs" style="left:1018px;top:126px;" width="20" height="18" viewBox="0 0 20 18"><rect x="1.5" y="1.5" width="11" height="10" fill="#d8d8e8" stroke="#555" stroke-width="1.2"/><rect x="3.5" y="3.5" width="7" height="6" fill="#eee" stroke="#888" stroke-width="0.8"/><circle cx="12.5" cy="12" r="5" fill="#c89a30"/><circle cx="12.5" cy="12" r="3.8" fill="#f8d030"/></svg>
<svg class="abs" style="left:1056px;top:126px;" width="20" height="18" viewBox="0 0 20 18"><rect x="1.5" y="1.5" width="11" height="10" fill="#d8d8e8" stroke="#555" stroke-width="1.2"/><rect x="3.5" y="3.5" width="7" height="6" fill="#eee" stroke="#888" stroke-width="0.8"/><circle cx="12.5" cy="12" r="5" fill="#c89a30"/><circle cx="12.5" cy="12" r="3.8" fill="#f8d030"/></svg>
<div class="abs" style="left:1092px;top:128px;width:15px;height:16px;background:#00ff00;border:1px solid #111"></div>
<div class="t" style="left:1112px;top:128.4px;font-size:15px;color:#111111;">green</div>
<div class="t" style="left:1210px;top:128.4px;font-size:15px;color:#111111;">Continu...</div>
<div class="abs" style="left:1289px;top:135px;width:26px;height:1px;background:#111;"></div>
<div class="t" style="left:1321px;top:128.4px;font-size:15px;color:#111111;">De</div>
<svg class="abs" style="left:196px;top:154px;" width="20" height="10" viewBox="0 0 20 10"><path d="M1.5 8.5 L6.5 1.5 H18.5 L13.5 8.5Z" fill="#cde0f2" stroke="#2f3e55" stroke-width="1.6" stroke-linejoin="round"/></svg>
<div class="t" style="left:229px;top:151.4px;font-size:15px;color:#111111;">BDRTXT</div>
<svg class="abs" style="left:494px;top:149px;" width="12" height="18" viewBox="0 0 12 18"><path d="M6 1.5 a4.6 4.6 0 0 1 4.6 4.6 c0 2.2 -1.3 3.2 -2 4.5 v5.5 h-5.2 v-5.5 c-0.7 -1.3 -2 -2.3 -2 -4.5 a4.6 4.6 0 0 1 4.6 -4.6z" fill="#fcf8d8" stroke="#55554a" stroke-width="1.1"/><rect x="5.2" y="11" width="1.8" height="4.5" fill="#fff"/></svg>
<svg class="abs" style="left:541px;top:148px;" width="18" height="18" viewBox="0 0 18 18"><g fill="#6f6c5c"><circle cx="16.6" cy="9.0" r="0.8"/><circle cx="14.4" cy="14.4" r="0.8"/><circle cx="9.0" cy="16.6" r="0.8"/><circle cx="3.6" cy="14.4" r="0.8"/><circle cx="1.4" cy="9.0" r="0.8"/><circle cx="3.6" cy="3.6" r="0.8"/><circle cx="9.0" cy="1.4" r="0.8"/><circle cx="14.4" cy="3.6" r="0.8"/></g><circle cx="9" cy="9" r="5.8" fill="#f7eba8" stroke="#a89c70" stroke-width="1"/></svg>
<svg class="abs" style="left:590px;top:149px;" width="21" height="18" viewBox="0 0 21 18"><path d="M11.5 9 V5 a3.6 3.6 0 0 1 7.2 0 V6.5" fill="none" stroke="#4a4232" stroke-width="2.8"/><path d="M11.5 9 V5 a3.6 3.6 0 0 1 7.2 0 V6.5" fill="none" stroke="#ddd6bc" stroke-width="1.1"/><rect x="1" y="9" width="13" height="8.5" fill="#f2dfae" stroke="#4f4530" stroke-width="1.4"/><rect x="6.6" y="11" width="1.6" height="4.6" fill="#3a2a10"/></svg>
<div class="abs" style="left:624px;top:151px;width:15px;height:16px;background:#ff00ff;border:1px solid #111"></div>
<div class="t" style="left:644px;top:151.4px;font-size:15px;color:#111111;">ma...</div>
<div class="t" style="left:684px;top:151.4px;font-size:15px;color:#111111;">Continu...</div>
<div class="abs" style="left:763px;top:158px;width:26px;height:1px;background:#111;"></div>
<div class="t" style="left:796px;top:151.4px;font-size:15px;color:#111111;">Defa...</div>
<div class="t" style="left:850px;top:151.4px;font-size:15px;color:#111111;">0</div>
<div class="t" style="left:918px;top:151.8px;font-size:14.6px;color:#d0d0d0;">Color_6</div>
<svg class="abs" style="left:989px;top:150px;" width="14" height="14" viewBox="0 0 14 14"><rect x="3" y="1" width="8" height="3" fill="#fff" stroke="#333" stroke-width="1"/><rect x="0.5" y="4.5" width="13" height="5" rx="1.5" fill="#fff" stroke="#333" stroke-width="1"/><rect x="3" y="9.5" width="8" height="3.5" fill="#fff" stroke="#333" stroke-width="1"/></svg>
<svg class="abs" style="left:1018px;top:149px;" width="20" height="18" viewBox="0 0 20 18"><rect x="1.5" y="1.5" width="11" height="10" fill="#d8d8e8" stroke="#555" stroke-width="1.2"/><rect x="3.5" y="3.5" width="7" height="6" fill="#eee" stroke="#888" stroke-width="0.8"/><circle cx="12.5" cy="12" r="5" fill="#c89a30"/><circle cx="12.5" cy="12" r="3.8" fill="#f8d030"/></svg>
<svg class="abs" style="left:1056px;top:149px;" width="20" height="18" viewBox="0 0 20 18"><rect x="1.5" y="1.5" width="11" height="10" fill="#d8d8e8" stroke="#555" stroke-width="1.2"/><rect x="3.5" y="3.5" width="7" height="6" fill="#eee" stroke="#888" stroke-width="0.8"/><circle cx="12.5" cy="12" r="5" fill="#c89a30"/><circle cx="12.5" cy="12" r="3.8" fill="#f8d030"/></svg>
<div class="abs" style="left:1092px;top:151px;width:15px;height:16px;background:#ff00ff;border:1px solid #111"></div>
<div class="t" style="left:1112px;top:151.4px;font-size:15px;color:#111111;">magenta</div>
<div class="t" style="left:1210px;top:151.4px;font-size:15px;color:#111111;">Continu...</div>
<div class="abs" style="left:1289px;top:158px;width:26px;height:1px;background:#111;"></div>
<div class="t" style="left:1321px;top:151.4px;font-size:15px;color:#111111;">De</div>
<svg class="abs" style="left:196px;top:177px;" width="20" height="10" viewBox="0 0 20 10"><path d="M1.5 8.5 L6.5 1.5 H18.5 L13.5 8.5Z" fill="#cde0f2" stroke="#2f3e55" stroke-width="1.6" stroke-linejoin="round"/></svg>
<div class="t" style="left:229px;top:174.4px;font-size:15px;color:#111111;">BRDTITLE</div>
<svg class="abs" style="left:494px;top:172px;" width="12" height="18" viewBox="0 0 12 18"><path d="M6 1.5 a4.6 4.6 0 0 1 4.6 4.6 c0 2.2 -1.3 3.2 -2 4.5 v5.5 h-5.2 v-5.5 c-0.7 -1.3 -2 -2.3 -2 -4.5 a4.6 4.6 0 0 1 4.6 -4.6z" fill="#fcf8d8" stroke="#55554a" stroke-width="1.1"/><rect x="5.2" y="11" width="1.8" height="4.5" fill="#fff"/></svg>
<svg class="abs" style="left:541px;top:171px;" width="18" height="18" viewBox="0 0 18 18"><g fill="#6f6c5c"><circle cx="16.6" cy="9.0" r="0.8"/><circle cx="14.4" cy="14.4" r="0.8"/><circle cx="9.0" cy="16.6" r="0.8"/><circle cx="3.6" cy="14.4" r="0.8"/><circle cx="1.4" cy="9.0" r="0.8"/><circle cx="3.6" cy="3.6" r="0.8"/><circle cx="9.0" cy="1.4" r="0.8"/><circle cx="14.4" cy="3.6" r="0.8"/></g><circle cx="9" cy="9" r="5.8" fill="#f7eba8" stroke="#a89c70" stroke-width="1"/></svg>
<svg class="abs" style="left:590px;top:172px;" width="21" height="18" viewBox="0 0 21 18"><path d="M11.5 9 V5 a3.6 3.6 0 0 1 7.2 0 V6.5" fill="none" stroke="#4a4232" stroke-width="2.8"/><path d="M11.5 9 V5 a3.6 3.6 0 0 1 7.2 0 V6.5" fill="none" stroke="#ddd6bc" stroke-width="1.1"/><rect x="1" y="9" width="13" height="8.5" fill="#f2dfae" stroke="#4f4530" stroke-width="1.4"/><rect x="6.6" y="11" width="1.6" height="4.6" fill="#3a2a10"/></svg>
<div class="abs" style="left:624px;top:174px;width:15px;height:16px;background:#ff0000;border:1px solid #111"></div>
<div class="t" style="left:644px;top:174.4px;font-size:15px;color:#111111;">red</div>
<div class="t" style="left:684px;top:174.4px;font-size:15px;color:#111111;">Continu...</div>
<div class="abs" style="left:763px;top:181px;width:26px;height:1px;background:#111;"></div>
<div class="t" style="left:796px;top:174.4px;font-size:15px;color:#111111;">Defa...</div>
<div class="t" style="left:850px;top:174.4px;font-size:15px;color:#111111;">0</div>
<div class="t" style="left:918px;top:174.8px;font-size:14.6px;color:#d0d0d0;">Color_1</div>
<svg class="abs" style="left:989px;top:173px;" width="14" height="14" viewBox="0 0 14 14"><rect x="3" y="1" width="8" height="3" fill="#fff" stroke="#333" stroke-width="1"/><rect x="0.5" y="4.5" width="13" height="5" rx="1.5" fill="#fff" stroke="#333" stroke-width="1"/><rect x="3" y="9.5" width="8" height="3.5" fill="#fff" stroke="#333" stroke-width="1"/></svg>
<svg class="abs" style="left:1018px;top:172px;" width="20" height="18" viewBox="0 0 20 18"><rect x="1.5" y="1.5" width="11" height="10" fill="#d8d8e8" stroke="#555" stroke-width="1.2"/><rect x="3.5" y="3.5" width="7" height="6" fill="#eee" stroke="#888" stroke-width="0.8"/><circle cx="12.5" cy="12" r="5" fill="#c89a30"/><circle cx="12.5" cy="12" r="3.8" fill="#f8d030"/></svg>
<svg class="abs" style="left:1056px;top:172px;" width="20" height="18" viewBox="0 0 20 18"><rect x="1.5" y="1.5" width="11" height="10" fill="#d8d8e8" stroke="#555" stroke-width="1.2"/><rect x="3.5" y="3.5" width="7" height="6" fill="#eee" stroke="#888" stroke-width="0.8"/><circle cx="12.5" cy="12" r="5" fill="#c89a30"/><circle cx="12.5" cy="12" r="3.8" fill="#f8d030"/></svg>
<div class="abs" style="left:1092px;top:174px;width:15px;height:16px;background:#ff0000;border:1px solid #111"></div>
<div class="t" style="left:1112px;top:174.4px;font-size:15px;color:#111111;">red</div>
<div class="t" style="left:1210px;top:174.4px;font-size:15px;color:#111111;">Continu...</div>
<div class="abs" style="left:1289px;top:181px;width:26px;height:1px;background:#111;"></div>
<div class="t" style="left:1321px;top:174.4px;font-size:15px;color:#111111;">De</div>
<svg class="abs" style="left:196px;top:200px;" width="20" height="10" viewBox="0 0 20 10"><path d="M1.5 8.5 L6.5 1.5 H18.5 L13.5 8.5Z" fill="#cde0f2" stroke="#2f3e55" stroke-width="1.6" stroke-linejoin="round"/></svg>
<div class="t" style="left:229px;top:197.4px;font-size:15px;color:#111111;">Cabinetry</div>
<svg class="abs" style="left:494px;top:195px;" width="12" height="18" viewBox="0 0 12 18"><path d="M6 1.5 a4.6 4.6 0 0 1 4.6 4.6 c0 2.2 -1.3 3.2 -2 4.5 v5.5 h-5.2 v-5.5 c-0.7 -1.3 -2 -2.3 -2 -4.5 a4.6 4.6 0 0 1 4.6 -4.6z" fill="#fcf8d8" stroke="#55554a" stroke-width="1.1"/><rect x="5.2" y="11" width="1.8" height="4.5" fill="#fff"/></svg>
<svg class="abs" style="left:541px;top:194px;" width="18" height="18" viewBox="0 0 18 18"><g fill="#6f6c5c"><circle cx="16.6" cy="9.0" r="0.8"/><circle cx="14.4" cy="14.4" r="0.8"/><circle cx="9.0" cy="16.6" r="0.8"/><circle cx="3.6" cy="14.4" r="0.8"/><circle cx="1.4" cy="9.0" r="0.8"/><circle cx="3.6" cy="3.6" r="0.8"/><circle cx="9.0" cy="1.4" r="0.8"/><circle cx="14.4" cy="3.6" r="0.8"/></g><circle cx="9" cy="9" r="5.8" fill="#f7eba8" stroke="#a89c70" stroke-width="1"/></svg>
<svg class="abs" style="left:590px;top:195px;" width="21" height="18" viewBox="0 0 21 18"><path d="M11.5 9 V5 a3.6 3.6 0 0 1 7.2 0 V6.5" fill="none" stroke="#4a4232" stroke-width="2.8"/><path d="M11.5 9 V5 a3.6 3.6 0 0 1 7.2 0 V6.5" fill="none" stroke="#ddd6bc" stroke-width="1.1"/><rect x="1" y="9" width="13" height="8.5" fill="#f2dfae" stroke="#4f4530" stroke-width="1.4"/><rect x="6.6" y="11" width="1.6" height="4.6" fill="#3a2a10"/></svg>
<div class="abs" style="left:624px;top:197px;width:15px;height:16px;background:#3f7f3f;border:1px solid #111"></div>
<div class="t" style="left:644px;top:197.4px;font-size:15px;color:#111111;">95</div>
<div class="t" style="left:684px;top:197.4px;font-size:15px;color:#111111;">Continu...</div>
<div class="abs" style="left:763px;top:204px;width:26px;height:1px;background:#111;"></div>
<div class="t" style="left:796px;top:197.4px;font-size:15px;color:#111111;">Defa...</div>
<div class="t" style="left:850px;top:197.4px;font-size:15px;color:#111111;">0</div>
<div class="t" style="left:918px;top:197.8px;font-size:14.6px;color:#d0d0d0;">Color_95</div>
<svg class="abs" style="left:989px;top:196px;" width="14" height="14" viewBox="0 0 14 14"><rect x="3" y="1" width="8" height="3" fill="#fff" stroke="#333" stroke-width="1"/><rect x="0.5" y="4.5" width="13" height="5" rx="1.5" fill="#fff" stroke="#333" stroke-width="1"/><rect x="3" y="9.5" width="8" height="3.5" fill="#fff" stroke="#333" stroke-width="1"/></svg>
<svg class="abs" style="left:1018px;top:195px;" width="20" height="18" viewBox="0 0 20 18"><rect x="1.5" y="1.5" width="11" height="10" fill="#d8d8e8" stroke="#555" stroke-width="1.2"/><rect x="3.5" y="3.5" width="7" height="6" fill="#eee" stroke="#888" stroke-width="0.8"/><circle cx="12.5" cy="12" r="5" fill="#c89a30"/><circle cx="12.5" cy="12" r="3.8" fill="#f8d030"/></svg>
<svg class="abs" style="left:1056px;top:195px;" width="20" height="18" viewBox="0 0 20 18"><rect x="1.5" y="1.5" width="11" height="10" fill="#d8d8e8" stroke="#555" stroke-width="1.2"/><rect x="3.5" y="3.5" width="7" height="6" fill="#eee" stroke="#888" stroke-width="0.8"/><circle cx="12.5" cy="12" r="5" fill="#c89a30"/><circle cx="12.5" cy="12" r="3.8" fill="#f8d030"/></svg>
<div class="abs" style="left:1092px;top:197px;width:15px;height:16px;background:#3f7f3f;border:1px solid #111"></div>
<div class="t" style="left:1112px;top:197.4px;font-size:15px;color:#111111;">95</div>
<div class="t" style="left:1210px;top:197.4px;font-size:15px;color:#111111;">Continu...</div>
<div class="abs" style="left:1289px;top:204px;width:26px;height:1px;background:#111;"></div>
<div class="t" style="left:1321px;top:197.4px;font-size:15px;color:#111111;">De</div>
<svg class="abs" style="left:196px;top:223px;" width="20" height="10" viewBox="0 0 20 10"><path d="M1.5 8.5 L6.5 1.5 H18.5 L13.5 8.5Z" fill="#cde0f2" stroke="#2f3e55" stroke-width="1.6" stroke-linejoin="round"/></svg>
<div class="t" style="left:229px;top:220.4px;font-size:15px;color:#111111;">DB - Windows</div>
<svg class="abs" style="left:494px;top:218px;" width="12" height="18" viewBox="0 0 12 18"><path d="M6 1.5 a4.6 4.6 0 0 1 4.6 4.6 c0 2.2 -1.3 3.2 -2 4.5 v5.5 h-5.2 v-5.5 c-0.7 -1.3 -2 -2.3 -2 -4.5 a4.6 4.6 0 0 1 4.6 -4.6z" fill="#fcf8d8" stroke="#55554a" stroke-width="1.1"/><rect x="5.2" y="11" width="1.8" height="4.5" fill="#fff"/></svg>
<svg class="abs" style="left:541px;top:217px;" width="18" height="18" viewBox="0 0 18 18"><g fill="#6f6c5c"><circle cx="16.6" cy="9.0" r="0.8"/><circle cx="14.4" cy="14.4" r="0.8"/><circle cx="9.0" cy="16.6" r="0.8"/><circle cx="3.6" cy="14.4" r="0.8"/><circle cx="1.4" cy="9.0" r="0.8"/><circle cx="3.6" cy="3.6" r="0.8"/><circle cx="9.0" cy="1.4" r="0.8"/><circle cx="14.4" cy="3.6" r="0.8"/></g><circle cx="9" cy="9" r="5.8" fill="#f7eba8" stroke="#a89c70" stroke-width="1"/></svg>
<svg class="abs" style="left:590px;top:218px;" width="21" height="18" viewBox="0 0 21 18"><path d="M11.5 9 V5 a3.6 3.6 0 0 1 7.2 0 V6.5" fill="none" stroke="#4a4232" stroke-width="2.8"/><path d="M11.5 9 V5 a3.6 3.6 0 0 1 7.2 0 V6.5" fill="none" stroke="#ddd6bc" stroke-width="1.1"/><rect x="1" y="9" width="13" height="8.5" fill="#f2dfae" stroke="#4f4530" stroke-width="1.4"/><rect x="6.6" y="11" width="1.6" height="4.6" fill="#3a2a10"/></svg>
<div class="abs" style="left:624px;top:220px;width:15px;height:16px;background:#0000ff;border:1px solid #111"></div>
<div class="t" style="left:644px;top:220.4px;font-size:15px;color:#111111;">blue</div>
<div class="t" style="left:684px;top:220.4px;font-size:15px;color:#111111;">Continu...</div>
<div class="abs" style="left:763px;top:227px;width:26px;height:1px;background:#111;"></div>
<div class="t" style="left:796px;top:220.4px;font-size:15px;color:#111111;">Defa...</div>
<div class="t" style="left:850px;top:220.4px;font-size:15px;color:#111111;">0</div>
<div class="t" style="left:918px;top:220.8px;font-size:14.6px;color:#d0d0d0;">Color_5</div>
<svg class="abs" style="left:989px;top:219px;" width="14" height="14" viewBox="0 0 14 14"><rect x="3" y="1" width="8" height="3" fill="#fff" stroke="#333" stroke-width="1"/><rect x="0.5" y="4.5" width="13" height="5" rx="1.5" fill="#fff" stroke="#333" stroke-width="1"/><rect x="3" y="9.5" width="8" height="3.5" fill="#fff" stroke="#333" stroke-width="1"/></svg>
<svg class="abs" style="left:1018px;top:218px;" width="20" height="18" viewBox="0 0 20 18"><rect x="1.5" y="1.5" width="11" height="10" fill="#d8d8e8" stroke="#555" stroke-width="1.2"/><rect x="3.5" y="3.5" width="7" height="6" fill="#eee" stroke="#888" stroke-width="0.8"/><circle cx="12.5" cy="12" r="5" fill="#c89a30"/><circle cx="12.5" cy="12" r="3.8" fill="#f8d030"/></svg>
<svg class="abs" style="left:1056px;top:218px;" width="20" height="18" viewBox="0 0 20 18"><rect x="1.5" y="1.5" width="11" height="10" fill="#d8d8e8" stroke="#555" stroke-width="1.2"/><rect x="3.5" y="3.5" width="7" height="6" fill="#eee" stroke="#888" stroke-width="0.8"/><circle cx="12.5" cy="12" r="5" fill="#c89a30"/><circle cx="12.5" cy="12" r="3.8" fill="#f8d030"/></svg>
<div class="abs" style="left:1092px;top:220px;width:15px;height:16px;background:#0000ff;border:1px solid #111"></div>
<div class="t" style="left:1112px;top:220.4px;font-size:15px;color:#111111;">blue</div>
<div class="t" style="left:1210px;top:220.4px;font-size:15px;color:#111111;">Continu...</div>
<div class="abs" style="left:1289px;top:227px;width:26px;height:1px;background:#111;"></div>
<div class="t" style="left:1321px;top:220.4px;font-size:15px;color:#111111;">De</div>
<svg class="abs" style="left:196px;top:246px;" width="20" height="10" viewBox="0 0 20 10"><path d="M1.5 8.5 L6.5 1.5 H18.5 L13.5 8.5Z" fill="#cde0f2" stroke="#2f3e55" stroke-width="1.6" stroke-linejoin="round"/></svg>
<div class="t" style="left:229px;top:243.4px;font-size:15px;color:#111111;">Defpoints</div>
<svg class="abs" style="left:494px;top:241px;" width="12" height="18" viewBox="0 0 12 18"><path d="M6 1.5 a4.6 4.6 0 0 1 4.6 4.6 c0 2.2 -1.3 3.2 -2 4.5 v5.5 h-5.2 v-5.5 c-0.7 -1.3 -2 -2.3 -2 -4.5 a4.6 4.6 0 0 1 4.6 -4.6z" fill="#fcf8d8" stroke="#55554a" stroke-width="1.1"/><rect x="5.2" y="11" width="1.8" height="4.5" fill="#fff"/></svg>
<svg class="abs" style="left:541px;top:240px;" width="18" height="18" viewBox="0 0 18 18"><g fill="#6f6c5c"><circle cx="16.6" cy="9.0" r="0.8"/><circle cx="14.4" cy="14.4" r="0.8"/><circle cx="9.0" cy="16.6" r="0.8"/><circle cx="3.6" cy="14.4" r="0.8"/><circle cx="1.4" cy="9.0" r="0.8"/><circle cx="3.6" cy="3.6" r="0.8"/><circle cx="9.0" cy="1.4" r="0.8"/><circle cx="14.4" cy="3.6" r="0.8"/></g><circle cx="9" cy="9" r="5.8" fill="#f7eba8" stroke="#a89c70" stroke-width="1"/></svg>
<svg class="abs" style="left:590px;top:241px;" width="21" height="18" viewBox="0 0 21 18"><path d="M11.5 9 V5 a3.6 3.6 0 0 1 7.2 0 V6.5" fill="none" stroke="#4a4232" stroke-width="2.8"/><path d="M11.5 9 V5 a3.6 3.6 0 0 1 7.2 0 V6.5" fill="none" stroke="#ddd6bc" stroke-width="1.1"/><rect x="1" y="9" width="13" height="8.5" fill="#f2dfae" stroke="#4f4530" stroke-width="1.4"/><rect x="6.6" y="11" width="1.6" height="4.6" fill="#3a2a10"/></svg>
<div class="abs" style="left:624px;top:243px;width:15px;height:16px;background:#000;border:1px solid #111"></div>
<div class="t" style="left:644px;top:243.4px;font-size:15px;color:#111111;">wh...</div>
<div class="t" style="left:684px;top:243.4px;font-size:15px;color:#111111;">Continu...</div>
<div class="abs" style="left:763px;top:250px;width:26px;height:1px;background:#111;"></div>
<div class="t" style="left:796px;top:243.4px;font-size:15px;color:#111111;">Defa...</div>
<div class="t" style="left:850px;top:243.4px;font-size:15px;color:#111111;">0</div>
<div class="t" style="left:918px;top:243.8px;font-size:14.6px;color:#d0d0d0;">Color_7</div>
<svg class="abs" style="left:989px;top:242px;" width="14" height="14" viewBox="0 0 14 14"><rect x="3" y="1" width="8" height="3" fill="#777" stroke="#888" stroke-width="1"/><rect x="0.5" y="4.5" width="13" height="5" rx="1.5" fill="#777" stroke="#888" stroke-width="1"/><rect x="3" y="9.5" width="8" height="3.5" fill="#777" stroke="#888" stroke-width="1"/></svg>
<svg class="abs" style="left:1018px;top:241px;" width="20" height="18" viewBox="0 0 20 18"><rect x="1.5" y="1.5" width="11" height="10" fill="#d8d8e8" stroke="#555" stroke-width="1.2"/><rect x="3.5" y="3.5" width="7" height="6" fill="#eee" stroke="#888" stroke-width="0.8"/><circle cx="12.5" cy="12" r="5" fill="#c89a30"/><circle cx="12.5" cy="12" r="3.8" fill="#f8d030"/></svg>
<svg class="abs" style="left:1056px;top:241px;" width="20" height="18" viewBox="0 0 20 18"><rect x="1.5" y="1.5" width="11" height="10" fill="#d8d8e8" stroke="#555" stroke-width="1.2"/><rect x="3.5" y="3.5" width="7" height="6" fill="#eee" stroke="#888" stroke-width="0.8"/><circle cx="12.5" cy="12" r="5" fill="#c89a30"/><circle cx="12.5" cy="12" r="3.8" fill="#f8d030"/></svg>
<div class="abs" style="left:1092px;top:243px;width:15px;height:16px;background:#000;border:1px solid #111"></div>
<div class="t" style="left:1112px;top:243.4px;font-size:15px;color:#111111;">white</div>
<div class="t" style="left:1210px;top:243.4px;font-size:15px;color:#111111;">Continu...</div>
<div class="abs" style="left:1289px;top:250px;width:26px;height:1px;background:#111;"></div>
<div class="t" style="left:1321px;top:243.4px;font-size:15px;color:#111111;">De</div>
<div class="abs" style="left:195px;top:262px;width:282px;height:23px;background:#5e5e5e;"></div>
<div class="abs" style="left:480px;top:262px;width:860px;height:23px;background:#5e5e5e;"></div>
<svg class="abs" style="left:196px;top:269px;" width="20" height="10" viewBox="0 0 20 10"><path d="M1.5 8.5 L6.5 1.5 H18.5 L13.5 8.5Z" fill="#cde0f2" stroke="#2f3e55" stroke-width="1.6" stroke-linejoin="round"/></svg>
<div class="t" style="left:229px;top:266.4px;font-size:15px;color:#ffffff;">Doors</div>
<svg class="abs" style="left:494px;top:264px;" width="12" height="18" viewBox="0 0 12 18"><path d="M6 1.5 a4.6 4.6 0 0 1 4.6 4.6 c0 2.2 -1.3 3.2 -2 4.5 v5.5 h-5.2 v-5.5 c-0.7 -1.3 -2 -2.3 -2 -4.5 a4.6 4.6 0 0 1 4.6 -4.6z" fill="#fcf8d8" stroke="#55554a" stroke-width="1.1"/><rect x="5.2" y="11" width="1.8" height="4.5" fill="#fff"/></svg>
<svg class="abs" style="left:541px;top:263px;" width="18" height="18" viewBox="0 0 18 18"><g fill="#6f6c5c"><circle cx="16.6" cy="9.0" r="0.8"/><circle cx="14.4" cy="14.4" r="0.8"/><circle cx="9.0" cy="16.6" r="0.8"/><circle cx="3.6" cy="14.4" r="0.8"/><circle cx="1.4" cy="9.0" r="0.8"/><circle cx="3.6" cy="3.6" r="0.8"/><circle cx="9.0" cy="1.4" r="0.8"/><circle cx="14.4" cy="3.6" r="0.8"/></g><circle cx="9" cy="9" r="5.8" fill="#f7eba8" stroke="#a89c70" stroke-width="1"/></svg>
<svg class="abs" style="left:590px;top:264px;" width="21" height="18" viewBox="0 0 21 18"><path d="M11.5 9 V5 a3.6 3.6 0 0 1 7.2 0 V6.5" fill="none" stroke="#4a4232" stroke-width="2.8"/><path d="M11.5 9 V5 a3.6 3.6 0 0 1 7.2 0 V6.5" fill="none" stroke="#ddd6bc" stroke-width="1.1"/><rect x="1" y="9" width="13" height="8.5" fill="#f2dfae" stroke="#4f4530" stroke-width="1.4"/><rect x="6.6" y="11" width="1.6" height="4.6" fill="#3a2a10"/></svg>
<div class="abs" style="left:624px;top:266px;width:15px;height:16px;background:#00ebeb;border:1px solid #111"></div>
<div class="t" style="left:644px;top:266.4px;font-size:15px;color:#ffffff;">0,2...</div>
<div class="t" style="left:684px;top:266.4px;font-size:15px;color:#ffffff;">Continu...</div>
<div class="abs" style="left:763px;top:273px;width:26px;height:1px;background:#fff;"></div>
<div class="t" style="left:796px;top:266.4px;font-size:15px;color:#ffffff;">Defa...</div>
<div class="t" style="left:850px;top:266.4px;font-size:15px;color:#ffffff;">0</div>
<div class="t" style="left:918px;top:266.8px;font-size:14.6px;color:#d0d0d0;">Color_4</div>
<svg class="abs" style="left:989px;top:265px;" width="14" height="14" viewBox="0 0 14 14"><rect x="3" y="1" width="8" height="3" fill="#fff" stroke="#333" stroke-width="1"/><rect x="0.5" y="4.5" width="13" height="5" rx="1.5" fill="#fff" stroke="#333" stroke-width="1"/><rect x="3" y="9.5" width="8" height="3.5" fill="#fff" stroke="#333" stroke-width="1"/></svg>
<svg class="abs" style="left:1018px;top:264px;" width="20" height="18" viewBox="0 0 20 18"><rect x="1.5" y="1.5" width="11" height="10" fill="#d8d8e8" stroke="#555" stroke-width="1.2"/><rect x="3.5" y="3.5" width="7" height="6" fill="#eee" stroke="#888" stroke-width="0.8"/><circle cx="12.5" cy="12" r="5" fill="#c89a30"/><circle cx="12.5" cy="12" r="3.8" fill="#f8d030"/></svg>
<svg class="abs" style="left:1056px;top:264px;" width="20" height="18" viewBox="0 0 20 18"><rect x="1.5" y="1.5" width="11" height="10" fill="#d8d8e8" stroke="#555" stroke-width="1.2"/><rect x="3.5" y="3.5" width="7" height="6" fill="#eee" stroke="#888" stroke-width="0.8"/><circle cx="12.5" cy="12" r="5" fill="#c89a30"/><circle cx="12.5" cy="12" r="3.8" fill="#f8d030"/></svg>
<div class="abs" style="left:1092px;top:266px;width:15px;height:16px;background:#00ebeb;border:1px solid #111"></div>
<div class="t" style="left:1112px;top:266.4px;font-size:15px;color:#ffffff;">0,235,235</div>
<div class="t" style="left:1210px;top:266.4px;font-size:15px;color:#ffffff;">Continu...</div>
<div class="abs" style="left:1289px;top:273px;width:26px;height:1px;background:#fff;"></div>
<div class="t" style="left:1321px;top:266.4px;font-size:15px;color:#ffffff;">De</div>
<svg class="abs" style="left:196px;top:292px;" width="20" height="10" viewBox="0 0 20 10"><path d="M1.5 8.5 L6.5 1.5 H18.5 L13.5 8.5Z" fill="#cde0f2" stroke="#2f3e55" stroke-width="1.6" stroke-linejoin="round"/></svg>
<div class="t" style="left:229px;top:289.4px;font-size:15px;color:#111111;">Stairs</div>
<svg class="abs" style="left:494px;top:287px;" width="12" height="18" viewBox="0 0 12 18"><path d="M6 1.5 a4.6 4.6 0 0 1 4.6 4.6 c0 2.2 -1.3 3.2 -2 4.5 v5.5 h-5.2 v-5.5 c-0.7 -1.3 -2 -2.3 -2 -4.5 a4.6 4.6 0 0 1 4.6 -4.6z" fill="#fcf8d8" stroke="#55554a" stroke-width="1.1"/><rect x="5.2" y="11" width="1.8" height="4.5" fill="#fff"/></svg>
<svg class="abs" style="left:541px;top:286px;" width="18" height="18" viewBox="0 0 18 18"><g fill="#6f6c5c"><circle cx="16.6" cy="9.0" r="0.8"/><circle cx="14.4" cy="14.4" r="0.8"/><circle cx="9.0" cy="16.6" r="0.8"/><circle cx="3.6" cy="14.4" r="0.8"/><circle cx="1.4" cy="9.0" r="0.8"/><circle cx="3.6" cy="3.6" r="0.8"/><circle cx="9.0" cy="1.4" r="0.8"/><circle cx="14.4" cy="3.6" r="0.8"/></g><circle cx="9" cy="9" r="5.8" fill="#f7eba8" stroke="#a89c70" stroke-width="1"/></svg>
<svg class="abs" style="left:590px;top:287px;" width="21" height="18" viewBox="0 0 21 18"><path d="M11.5 9 V5 a3.6 3.6 0 0 1 7.2 0 V6.5" fill="none" stroke="#4a4232" stroke-width="2.8"/><path d="M11.5 9 V5 a3.6 3.6 0 0 1 7.2 0 V6.5" fill="none" stroke="#ddd6bc" stroke-width="1.1"/><rect x="1" y="9" width="13" height="8.5" fill="#f2dfae" stroke="#4f4530" stroke-width="1.4"/><rect x="6.6" y="11" width="1.6" height="4.6" fill="#3a2a10"/></svg>
<div class="abs" style="left:624px;top:289px;width:15px;height:16px;background:#8a44a8;border:1px solid #111"></div>
<div class="t" style="left:644px;top:289.4px;font-size:15px;color:#111111;">203</div>
<div class="t" style="left:684px;top:289.4px;font-size:15px;color:#111111;">Continu...</div>
<div class="abs" style="left:763px;top:296px;width:26px;height:1px;background:#111;"></div>
<div class="t" style="left:796px;top:289.4px;font-size:15px;color:#111111;">Defa...</div>
<div class="t" style="left:850px;top:289.4px;font-size:15px;color:#111111;">0</div>
<div class="t" style="left:918px;top:289.8px;font-size:14.6px;color:#d0d0d0;">Color_...</div>
<svg class="abs" style="left:989px;top:288px;" width="14" height="14" viewBox="0 0 14 14"><rect x="3" y="1" width="8" height="3" fill="#fff" stroke="#333" stroke-width="1"/><rect x="0.5" y="4.5" width="13" height="5" rx="1.5" fill="#fff" stroke="#333" stroke-width="1"/><rect x="3" y="9.5" width="8" height="3.5" fill="#fff" stroke="#333" stroke-width="1"/></svg>
<svg class="abs" style="left:1018px;top:287px;" width="20" height="18" viewBox="0 0 20 18"><rect x="1.5" y="1.5" width="11" height="10" fill="#d8d8e8" stroke="#555" stroke-width="1.2"/><rect x="3.5" y="3.5" width="7" height="6" fill="#eee" stroke="#888" stroke-width="0.8"/><circle cx="12.5" cy="12" r="5" fill="#c89a30"/><circle cx="12.5" cy="12" r="3.8" fill="#f8d030"/></svg>
<svg class="abs" style="left:1056px;top:287px;" width="20" height="18" viewBox="0 0 20 18"><rect x="1.5" y="1.5" width="11" height="10" fill="#d8d8e8" stroke="#555" stroke-width="1.2"/><rect x="3.5" y="3.5" width="7" height="6" fill="#eee" stroke="#888" stroke-width="0.8"/><circle cx="12.5" cy="12" r="5" fill="#c89a30"/><circle cx="12.5" cy="12" r="3.8" fill="#f8d030"/></svg>
<div class="abs" style="left:1092px;top:289px;width:15px;height:16px;background:#8a44a8;border:1px solid #111"></div>
<div class="t" style="left:1112px;top:289.4px;font-size:15px;color:#111111;">203</div>
<div class="t" style="left:1210px;top:289.4px;font-size:15px;color:#111111;">Continu...</div>
<div class="abs" style="left:1289px;top:296px;width:26px;height:1px;background:#111;"></div>
<div class="t" style="left:1321px;top:289.4px;font-size:15px;color:#111111;">De</div>
<svg class="abs" style="left:196px;top:315px;" width="20" height="10" viewBox="0 0 20 10"><path d="M1.5 8.5 L6.5 1.5 H18.5 L13.5 8.5Z" fill="#cde0f2" stroke="#2f3e55" stroke-width="1.6" stroke-linejoin="round"/></svg>
<div class="t" style="left:229px;top:312.4px;font-size:15px;color:#111111;">Text</div>
<svg class="abs" style="left:494px;top:310px;" width="12" height="18" viewBox="0 0 12 18"><path d="M6 1.5 a4.6 4.6 0 0 1 4.6 4.6 c0 2.2 -1.3 3.2 -2 4.5 v5.5 h-5.2 v-5.5 c-0.7 -1.3 -2 -2.3 -2 -4.5 a4.6 4.6 0 0 1 4.6 -4.6z" fill="#fcf8d8" stroke="#55554a" stroke-width="1.1"/><rect x="5.2" y="11" width="1.8" height="4.5" fill="#fff"/></svg>
<svg class="abs" style="left:541px;top:309px;" width="18" height="18" viewBox="0 0 18 18"><g fill="#6f6c5c"><circle cx="16.6" cy="9.0" r="0.8"/><circle cx="14.4" cy="14.4" r="0.8"/><circle cx="9.0" cy="16.6" r="0.8"/><circle cx="3.6" cy="14.4" r="0.8"/><circle cx="1.4" cy="9.0" r="0.8"/><circle cx="3.6" cy="3.6" r="0.8"/><circle cx="9.0" cy="1.4" r="0.8"/><circle cx="14.4" cy="3.6" r="0.8"/></g><circle cx="9" cy="9" r="5.8" fill="#f7eba8" stroke="#a89c70" stroke-width="1"/></svg>
<svg class="abs" style="left:590px;top:310px;" width="21" height="18" viewBox="0 0 21 18"><path d="M11.5 9 V5 a3.6 3.6 0 0 1 7.2 0 V6.5" fill="none" stroke="#4a4232" stroke-width="2.8"/><path d="M11.5 9 V5 a3.6 3.6 0 0 1 7.2 0 V6.5" fill="none" stroke="#ddd6bc" stroke-width="1.1"/><rect x="1" y="9" width="13" height="8.5" fill="#f2dfae" stroke="#4f4530" stroke-width="1.4"/><rect x="6.6" y="11" width="1.6" height="4.6" fill="#3a2a10"/></svg>
<div class="abs" style="left:624px;top:312px;width:15px;height:16px;background:#000;border:1px solid #111"></div>
<div class="t" style="left:644px;top:312.4px;font-size:15px;color:#111111;">wh...</div>
<div class="t" style="left:684px;top:312.4px;font-size:15px;color:#111111;">Continu...</div>
<div class="abs" style="left:763px;top:319px;width:26px;height:1px;background:#111;"></div>
<div class="t" style="left:796px;top:312.4px;font-size:15px;color:#111111;">Defa...</div>
<div class="t" style="left:850px;top:312.4px;font-size:15px;color:#111111;">0</div>
<div class="t" style="left:918px;top:312.8px;font-size:14.6px;color:#d0d0d0;">Color_7</div>
<svg class="abs" style="left:989px;top:311px;" width="14" height="14" viewBox="0 0 14 14"><rect x="3" y="1" width="8" height="3" fill="#fff" stroke="#333" stroke-width="1"/><rect x="0.5" y="4.5" width="13" height="5" rx="1.5" fill="#fff" stroke="#333" stroke-width="1"/><rect x="3" y="9.5" width="8" height="3.5" fill="#fff" stroke="#333" stroke-width="1"/></svg>
<svg class="abs" style="left:1018px;top:310px;" width="20" height="18" viewBox="0 0 20 18"><rect x="1.5" y="1.5" width="11" height="10" fill="#d8d8e8" stroke="#555" stroke-width="1.2"/><rect x="3.5" y="3.5" width="7" height="6" fill="#eee" stroke="#888" stroke-width="0.8"/><circle cx="12.5" cy="12" r="5" fill="#c89a30"/><circle cx="12.5" cy="12" r="3.8" fill="#f8d030"/></svg>
<svg class="abs" style="left:1056px;top:310px;" width="20" height="18" viewBox="0 0 20 18"><rect x="1.5" y="1.5" width="11" height="10" fill="#d8d8e8" stroke="#555" stroke-width="1.2"/><rect x="3.5" y="3.5" width="7" height="6" fill="#eee" stroke="#888" stroke-width="0.8"/><circle cx="12.5" cy="12" r="5" fill="#c89a30"/><circle cx="12.5" cy="12" r="3.8" fill="#f8d030"/></svg>
<div class="abs" style="left:1092px;top:312px;width:15px;height:16px;background:#000;border:1px solid #111"></div>
<div class="t" style="left:1112px;top:312.4px;font-size:15px;color:#111111;">white</div>
<div class="t" style="left:1210px;top:312.4px;font-size:15px;color:#111111;">Continu...</div>
<div class="abs" style="left:1289px;top:319px;width:26px;height:1px;background:#111;"></div>
<div class="t" style="left:1321px;top:312.4px;font-size:15px;color:#111111;">De</div>
<svg class="abs" style="left:196px;top:338px;" width="20" height="10" viewBox="0 0 20 10"><path d="M1.5 8.5 L6.5 1.5 H18.5 L13.5 8.5Z" fill="#cde0f2" stroke="#2f3e55" stroke-width="1.6" stroke-linejoin="round"/></svg>
<div class="t" style="left:229px;top:335.4px;font-size:15px;color:#111111;">View Labels</div>
<svg class="abs" style="left:494px;top:333px;" width="12" height="18" viewBox="0 0 12 18"><path d="M6 1.5 a4.6 4.6 0 0 1 4.6 4.6 c0 2.2 -1.3 3.2 -2 4.5 v5.5 h-5.2 v-5.5 c-0.7 -1.3 -2 -2.3 -2 -4.5 a4.6 4.6 0 0 1 4.6 -4.6z" fill="#fcf8d8" stroke="#55554a" stroke-width="1.1"/><rect x="5.2" y="11" width="1.8" height="4.5" fill="#fff"/></svg>
<svg class="abs" style="left:541px;top:332px;" width="18" height="18" viewBox="0 0 18 18"><g fill="#6f6c5c"><circle cx="16.6" cy="9.0" r="0.8"/><circle cx="14.4" cy="14.4" r="0.8"/><circle cx="9.0" cy="16.6" r="0.8"/><circle cx="3.6" cy="14.4" r="0.8"/><circle cx="1.4" cy="9.0" r="0.8"/><circle cx="3.6" cy="3.6" r="0.8"/><circle cx="9.0" cy="1.4" r="0.8"/><circle cx="14.4" cy="3.6" r="0.8"/></g><circle cx="9" cy="9" r="5.8" fill="#f7eba8" stroke="#a89c70" stroke-width="1"/></svg>
<svg class="abs" style="left:590px;top:333px;" width="21" height="18" viewBox="0 0 21 18"><path d="M11.5 9 V5 a3.6 3.6 0 0 1 7.2 0 V6.5" fill="none" stroke="#4a4232" stroke-width="2.8"/><path d="M11.5 9 V5 a3.6 3.6 0 0 1 7.2 0 V6.5" fill="none" stroke="#ddd6bc" stroke-width="1.1"/><rect x="1" y="9" width="13" height="8.5" fill="#f2dfae" stroke="#4f4530" stroke-width="1.4"/><rect x="6.6" y="11" width="1.6" height="4.6" fill="#3a2a10"/></svg>
<div class="abs" style="left:624px;top:335px;width:15px;height:16px;background:#000;border:1px solid #111"></div>
<div class="t" style="left:644px;top:335.4px;font-size:15px;color:#111111;">wh...</div>
<div class="t" style="left:684px;top:335.4px;font-size:15px;color:#111111;">Continu...</div>
<div class="abs" style="left:763px;top:342px;width:26px;height:1px;background:#111;"></div>
<div class="t" style="left:796px;top:335.4px;font-size:15px;color:#111111;">Defa...</div>
<div class="t" style="left:850px;top:335.4px;font-size:15px;color:#111111;">0</div>
<div class="t" style="left:918px;top:335.8px;font-size:14.6px;color:#d0d0d0;">Color_7</div>
<svg class="abs" style="left:989px;top:334px;" width="14" height="14" viewBox="0 0 14 14"><rect x="3" y="1" width="8" height="3" fill="#fff" stroke="#333" stroke-width="1"/><rect x="0.5" y="4.5" width="13" height="5" rx="1.5" fill="#fff" stroke="#333" stroke-width="1"/><rect x="3" y="9.5" width="8" height="3.5" fill="#fff" stroke="#333" stroke-width="1"/></svg>
<svg class="abs" style="left:1018px;top:333px;" width="20" height="18" viewBox="0 0 20 18"><rect x="1.5" y="1.5" width="11" height="10" fill="#d8d8e8" stroke="#555" stroke-width="1.2"/><rect x="3.5" y="3.5" width="7" height="6" fill="#eee" stroke="#888" stroke-width="0.8"/><circle cx="12.5" cy="12" r="5" fill="#c89a30"/><circle cx="12.5" cy="12" r="3.8" fill="#f8d030"/></svg>
<svg class="abs" style="left:1056px;top:333px;" width="20" height="18" viewBox="0 0 20 18"><rect x="1.5" y="1.5" width="11" height="10" fill="#d8d8e8" stroke="#555" stroke-width="1.2"/><rect x="3.5" y="3.5" width="7" height="6" fill="#eee" stroke="#888" stroke-width="0.8"/><circle cx="12.5" cy="12" r="5" fill="#c89a30"/><circle cx="12.5" cy="12" r="3.8" fill="#f8d030"/></svg>
<div class="abs" style="left:1092px;top:335px;width:15px;height:16px;background:#000;border:1px solid #111"></div>
<div class="t" style="left:1112px;top:335.4px;font-size:15px;color:#111111;">white</div>
<div class="t" style="left:1210px;top:335.4px;font-size:15px;color:#111111;">Continu...</div>
<div class="abs" style="left:1289px;top:342px;width:26px;height:1px;background:#111;"></div>
<div class="t" style="left:1321px;top:335.4px;font-size:15px;color:#111111;">De</div>
<svg class="abs" style="left:196px;top:361px;" width="20" height="10" viewBox="0 0 20 10"><path d="M1.5 8.5 L6.5 1.5 H18.5 L13.5 8.5Z" fill="#cde0f2" stroke="#2f3e55" stroke-width="1.6" stroke-linejoin="round"/></svg>
<div class="t" style="left:229px;top:358.4px;font-size:15px;color:#111111;">Viewports</div>
<svg class="abs" style="left:494px;top:356px;" width="12" height="18" viewBox="0 0 12 18"><path d="M6 1.5 a4.6 4.6 0 0 1 4.6 4.6 c0 2.2 -1.3 3.2 -2 4.5 v5.5 h-5.2 v-5.5 c-0.7 -1.3 -2 -2.3 -2 -4.5 a4.6 4.6 0 0 1 4.6 -4.6z" fill="#fcf8d8" stroke="#55554a" stroke-width="1.1"/><rect x="5.2" y="11" width="1.8" height="4.5" fill="#fff"/></svg>
<svg class="abs" style="left:541px;top:355px;" width="18" height="18" viewBox="0 0 18 18"><g fill="#6f6c5c"><circle cx="16.6" cy="9.0" r="0.8"/><circle cx="14.4" cy="14.4" r="0.8"/><circle cx="9.0" cy="16.6" r="0.8"/><circle cx="3.6" cy="14.4" r="0.8"/><circle cx="1.4" cy="9.0" r="0.8"/><circle cx="3.6" cy="3.6" r="0.8"/><circle cx="9.0" cy="1.4" r="0.8"/><circle cx="14.4" cy="3.6" r="0.8"/></g><circle cx="9" cy="9" r="5.8" fill="#f7eba8" stroke="#a89c70" stroke-width="1"/></svg>
<svg class="abs" style="left:590px;top:356px;" width="21" height="18" viewBox="0 0 21 18"><path d="M11.5 9 V5 a3.6 3.6 0 0 1 7.2 0 V6.5" fill="none" stroke="#4a4232" stroke-width="2.8"/><path d="M11.5 9 V5 a3.6 3.6 0 0 1 7.2 0 V6.5" fill="none" stroke="#ddd6bc" stroke-width="1.1"/><rect x="1" y="9" width="13" height="8.5" fill="#f2dfae" stroke="#4f4530" stroke-width="1.4"/><rect x="6.6" y="11" width="1.6" height="4.6" fill="#3a2a10"/></svg>
<div class="abs" style="left:624px;top:358px;width:15px;height:16px;background:#000;border:1px solid #111"></div>
<div class="t" style="left:644px;top:358.4px;font-size:15px;color:#111111;">wh...</div>
<div class="t" style="left:684px;top:358.4px;font-size:15px;color:#111111;">Continu...</div>
<div class="abs" style="left:763px;top:365px;width:26px;height:1px;background:#111;"></div>
<div class="t" style="left:796px;top:358.4px;font-size:15px;color:#111111;">Defa...</div>
<div class="t" style="left:850px;top:358.4px;font-size:15px;color:#111111;">0</div>
<div class="t" style="left:918px;top:358.8px;font-size:14.6px;color:#d0d0d0;">Color_7</div>
<svg class="abs" style="left:989px;top:357px;" width="14" height="14" viewBox="0 0 14 14"><rect x="3" y="1" width="8" height="3" fill="#fff" stroke="#333" stroke-width="1"/><rect x="0.5" y="4.5" width="13" height="5" rx="1.5" fill="#fff" stroke="#333" stroke-width="1"/><rect x="3" y="9.5" width="8" height="3.5" fill="#fff" stroke="#333" stroke-width="1"/></svg>
<svg class="abs" style="left:1018px;top:356px;" width="20" height="18" viewBox="0 0 20 18"><rect x="1.5" y="1.5" width="11" height="10" fill="#d8d8e8" stroke="#555" stroke-width="1.2"/><rect x="3.5" y="3.5" width="7" height="6" fill="#eee" stroke="#888" stroke-width="0.8"/><circle cx="12.5" cy="12" r="5" fill="#c89a30"/><circle cx="12.5" cy="12" r="3.8" fill="#f8d030"/></svg>
<svg class="abs" style="left:1056px;top:356px;" width="20" height="18" viewBox="0 0 20 18"><rect x="1.5" y="1.5" width="11" height="10" fill="#d8d8e8" stroke="#555" stroke-width="1.2"/><rect x="3.5" y="3.5" width="7" height="6" fill="#eee" stroke="#888" stroke-width="0.8"/><circle cx="12.5" cy="12" r="5" fill="#c89a30"/><circle cx="12.5" cy="12" r="3.8" fill="#f8d030"/></svg>
<div class="abs" style="left:1092px;top:358px;width:15px;height:16px;background:#000;border:1px solid #111"></div>
<div class="t" style="left:1112px;top:358.4px;font-size:15px;color:#111111;">white</div>
<div class="t" style="left:1210px;top:358.4px;font-size:15px;color:#111111;">Continu...</div>
<div class="abs" style="left:1289px;top:365px;width:26px;height:1px;background:#111;"></div>
<div class="t" style="left:1321px;top:358.4px;font-size:15px;color:#111111;">De</div>
<svg class="abs" style="left:196px;top:384px;" width="20" height="10" viewBox="0 0 20 10"><path d="M1.5 8.5 L6.5 1.5 H18.5 L13.5 8.5Z" fill="#cde0f2" stroke="#2f3e55" stroke-width="1.6" stroke-linejoin="round"/></svg>
<div class="t" style="left:229px;top:381.4px;font-size:15px;color:#111111;">Walls</div>
<svg class="abs" style="left:494px;top:379px;" width="12" height="18" viewBox="0 0 12 18"><path d="M6 1.5 a4.6 4.6 0 0 1 4.6 4.6 c0 2.2 -1.3 3.2 -2 4.5 v5.5 h-5.2 v-5.5 c-0.7 -1.3 -2 -2.3 -2 -4.5 a4.6 4.6 0 0 1 4.6 -4.6z" fill="#fcf8d8" stroke="#55554a" stroke-width="1.1"/><rect x="5.2" y="11" width="1.8" height="4.5" fill="#fff"/></svg>
<svg class="abs" style="left:541px;top:378px;" width="18" height="18" viewBox="0 0 18 18"><g fill="#6f6c5c"><circle cx="16.6" cy="9.0" r="0.8"/><circle cx="14.4" cy="14.4" r="0.8"/><circle cx="9.0" cy="16.6" r="0.8"/><circle cx="3.6" cy="14.4" r="0.8"/><circle cx="1.4" cy="9.0" r="0.8"/><circle cx="3.6" cy="3.6" r="0.8"/><circle cx="9.0" cy="1.4" r="0.8"/><circle cx="14.4" cy="3.6" r="0.8"/></g><circle cx="9" cy="9" r="5.8" fill="#f7eba8" stroke="#a89c70" stroke-width="1"/></svg>
<svg class="abs" style="left:590px;top:379px;" width="21" height="18" viewBox="0 0 21 18"><path d="M11.5 9 V5 a3.6 3.6 0 0 1 7.2 0 V6.5" fill="none" stroke="#4a4232" stroke-width="2.8"/><path d="M11.5 9 V5 a3.6 3.6 0 0 1 7.2 0 V6.5" fill="none" stroke="#ddd6bc" stroke-width="1.1"/><rect x="1" y="9" width="13" height="8.5" fill="#f2dfae" stroke="#4f4530" stroke-width="1.4"/><rect x="6.6" y="11" width="1.6" height="4.6" fill="#3a2a10"/></svg>
<div class="abs" style="left:624px;top:381px;width:15px;height:16px;background:#000;border:1px solid #111"></div>
<div class="t" style="left:644px;top:381.4px;font-size:15px;color:#111111;">wh...</div>
<div class="t" style="left:684px;top:381.4px;font-size:15px;color:#111111;">Continu...</div>
<div class="abs" style="left:763px;top:388px;width:26px;height:1px;background:#111;"></div>
<div class="t" style="left:796px;top:381.4px;font-size:15px;color:#111111;">Defa...</div>
<div class="t" style="left:850px;top:381.4px;font-size:15px;color:#111111;">0</div>
<div class="t" style="left:918px;top:381.8px;font-size:14.6px;color:#d0d0d0;">Color_7</div>
<svg class="abs" style="left:989px;top:380px;" width="14" height="14" viewBox="0 0 14 14"><rect x="3" y="1" width="8" height="3" fill="#fff" stroke="#333" stroke-width="1"/><rect x="0.5" y="4.5" width="13" height="5" rx="1.5" fill="#fff" stroke="#333" stroke-width="1"/><rect x="3" y="9.5" width="8" height="3.5" fill="#fff" stroke="#333" stroke-width="1"/></svg>
<svg class="abs" style="left:1018px;top:379px;" width="20" height="18" viewBox="0 0 20 18"><rect x="1.5" y="1.5" width="11" height="10" fill="#d8d8e8" stroke="#555" stroke-width="1.2"/><rect x="3.5" y="3.5" width="7" height="6" fill="#eee" stroke="#888" stroke-width="0.8"/><circle cx="12.5" cy="12" r="5" fill="#c89a30"/><circle cx="12.5" cy="12" r="3.8" fill="#f8d030"/></svg>
<svg class="abs" style="left:1056px;top:379px;" width="20" height="18" viewBox="0 0 20 18"><rect x="1.5" y="1.5" width="11" height="10" fill="#d8d8e8" stroke="#555" stroke-width="1.2"/><rect x="3.5" y="3.5" width="7" height="6" fill="#eee" stroke="#888" stroke-width="0.8"/><circle cx="12.5" cy="12" r="5" fill="#c89a30"/><circle cx="12.5" cy="12" r="3.8" fill="#f8d030"/></svg>
<div class="abs" style="left:1092px;top:381px;width:15px;height:16px;background:#000;border:1px solid #111"></div>
<div class="t" style="left:1112px;top:381.4px;font-size:15px;color:#111111;">white</div>
<div class="t" style="left:1210px;top:381.4px;font-size:15px;color:#111111;">Continu...</div>
<div class="abs" style="left:1289px;top:388px;width:26px;height:1px;background:#111;"></div>
<div class="t" style="left:1321px;top:381.4px;font-size:15px;color:#111111;">De</div>
<div class="abs" style="left:1340px;top:72px;width:3px;height:360px;background:#5b5b5b;"></div>
<div class="abs" style="left:195px;top:432px;width:1144px;height:21px;background:#f0f0f0;"></div>
<div class="abs" style="left:215px;top:433px;width:727px;height:19px;background:#cdcdcd;"></div>
<svg class="abs" style="left:199px;top:437px;" width="10" height="12" viewBox="0 0 10 12"><path d="M8 1 L3 6 L8 11" fill="none" stroke="#505050" stroke-width="2"/></svg>
<svg class="abs" style="left:1324px;top:437px;" width="10" height="12" viewBox="0 0 10 12"><path d="M2 1 L7 6 L2 11" fill="none" stroke="#505050" stroke-width="2"/></svg>
<div class="t" style="left:16px;top:476.6px;font-size:14.85px;color:#f2f2f2;">All non-Xref Layers: 13 layers displayed of 23 total layers</div>
<div class="abs" style="left:373px;top:423px;width:484px;height:467px;background:#f0f0f0;border:1px solid #4a4a4a;box-shadow:4px 4px 16px rgba(0,0,0,0.35)"></div>
<div class="abs" style="left:374px;top:424px;width:482px;height:37px;background:#ffffff;"></div>
<svg class="abs" style="left:383px;top:432px;" width="20" height="19" viewBox="0 0 20 19"><rect x="1" y="1" width="18" height="17" fill="#fdf1f1"/><path d="M3.2 16.9 L8.2 1.8 H11.8 L16.8 16.9 H12.9 L11.9 13.2 H8.1 L7.1 16.9 Z" fill="#bc1a2e"/><path d="M10 5.5 L11.2 10 H8.8 Z" fill="#f6d6da"/></svg>
<div class="t" style="left:408px;top:435.9px;font-size:14.5px;color:#000;">Select Color</div>
<svg class="abs" style="left:829px;top:436px;" width="12" height="12" viewBox="0 0 12 12"><path d="M0.5 0.5 L11.5 11.5 M11.5 0.5 L0.5 11.5" stroke="#111" stroke-width="1.3"/></svg>
<div class="abs" style="left:503px;top:475px;width:118px;height:22px;background:#f0f0f0;border:1px solid #d9d9d9;border-bottom:none"></div>
<div class="abs" style="left:621px;top:475px;width:118px;height:22px;background:#f0f0f0;border:1px solid #d9d9d9;border-bottom:none"></div>
<div class="t" style="left:531px;top:479.2px;font-size:13px;color:#000;">True Color</div>
<div class="t" style="left:645px;top:479.2px;font-size:13px;color:#000;">Color Books</div>
<div class="abs" style="left:380px;top:496px;width:466px;height:344px;background:#ffffff;border:1px solid #d9d9d9"></div>
<div class="abs" style="left:380px;top:473px;width:124px;height:25px;background:#ffffff;border:1px solid #d9d9d9;border-bottom:none"></div>
<div class="t" style="left:408px;top:477.2px;font-size:13px;color:#000;">Index Color</div>
<div class="t" style="left:394px;top:500.2px;font-size:13px;color:#000;">AutoCAD Color Index (ACI):</div>
<div class="abs" style="left:389px;top:514px;width:451px;height:168px;background:#f3f3f3;"></div>
<div class="abs" style="left:391px;top:517px;width:446px;height:76px;background:#fffbf0;"></div>
<div class="abs" style="left:391px;top:601px;width:446px;height:76px;background:#fffbf0;"></div>
<svg class="abs" style="left:0;top:0" width="1374" height="893"><rect x="392" y="518.0" width="18" height="14.2" fill="#290000"/><rect x="411" y="518.0" width="17" height="14.2" fill="#290a00"/><rect x="429" y="518.0" width="18" height="14.2" fill="#291400"/><rect x="448" y="518.0" width="17" height="14.2" fill="#291f00"/><rect x="466" y="518.0" width="18" height="14.2" fill="#292900"/><rect x="485" y="518.0" width="17" height="14.2" fill="#1f2900"/><rect x="503" y="518.0" width="18" height="14.2" fill="#142900"/><rect x="522" y="518.0" width="17" height="14.2" fill="#0a2900"/><rect x="540" y="518.0" width="18" height="14.2" fill="#002900"/><rect x="559" y="518.0" width="18" height="14.2" fill="#00290a"/><rect x="578" y="518.0" width="17" height="14.2" fill="#002914"/><rect x="596" y="518.0" width="18" height="14.2" fill="#00291f"/><rect x="615" y="518.0" width="17" height="14.2" fill="#002929"/><rect x="633" y="518.0" width="18" height="14.2" fill="#001f29"/><rect x="652" y="518.0" width="17" height="14.2" fill="#001429"/><rect x="670" y="518.0" width="18" height="14.2" fill="#000a29"/><rect x="689" y="518.0" width="17" height="14.2" fill="#000029"/><rect x="707" y="518.0" width="18" height="14.2" fill="#0a0029"/><rect x="726" y="518.0" width="17" height="14.2" fill="#140029"/><rect x="744" y="518.0" width="18" height="14.2" fill="#1f0029"/><rect x="763" y="518.0" width="18" height="14.2" fill="#290029"/><rect x="782" y="518.0" width="17" height="14.2" fill="#29001f"/><rect x="800" y="518.0" width="18" height="14.2" fill="#290014"/><rect x="819" y="518.0" width="17" height="14.2" fill="#29000a"/><rect x="392" y="533.2" width="18" height="14.2" fill="#4f0000"/><rect x="411" y="533.2" width="17" height="14.2" fill="#4f1400"/><rect x="429" y="533.2" width="18" height="14.2" fill="#4f2700"/><rect x="448" y="533.2" width="17" height="14.2" fill="#4f3b00"/><rect x="466" y="533.2" width="18" height="14.2" fill="#4f4f00"/><rect x="485" y="533.2" width="17" height="14.2" fill="#3b4f00"/><rect x="503" y="533.2" width="18" height="14.2" fill="#274f00"/><rect x="522" y="533.2" width="17" height="14.2" fill="#144f00"/><rect x="540" y="533.2" width="18" height="14.2" fill="#004f00"/><rect x="559" y="533.2" width="18" height="14.2" fill="#004f14"/><rect x="578" y="533.2" width="17" height="14.2" fill="#004f27"/><rect x="596" y="533.2" width="18" height="14.2" fill="#004f3b"/><rect x="615" y="533.2" width="17" height="14.2" fill="#004f4f"/><rect x="633" y="533.2" width="18" height="14.2" fill="#003b4f"/><rect x="652" y="533.2" width="17" height="14.2" fill="#00274f"/><rect x="670" y="533.2" width="18" height="14.2" fill="#00144f"/><rect x="689" y="533.2" width="17" height="14.2" fill="#00004f"/><rect x="707" y="533.2" width="18" height="14.2" fill="#14004f"/><rect x="726" y="533.2" width="17" height="14.2" fill="#27004f"/><rect x="744" y="533.2" width="18" height="14.2" fill="#3b004f"/><rect x="763" y="533.2" width="18" height="14.2" fill="#4f004f"/><rect x="782" y="533.2" width="17" height="14.2" fill="#4f003b"/><rect x="800" y="533.2" width="18" height="14.2" fill="#4f0027"/><rect x="819" y="533.2" width="17" height="14.2" fill="#4f0014"/><rect x="392" y="548.4" width="18" height="14.2" fill="#800000"/><rect x="411" y="548.4" width="17" height="14.2" fill="#802000"/><rect x="429" y="548.4" width="18" height="14.2" fill="#804000"/><rect x="448" y="548.4" width="17" height="14.2" fill="#806000"/><rect x="466" y="548.4" width="18" height="14.2" fill="#808000"/><rect x="485" y="548.4" width="17" height="14.2" fill="#608000"/><rect x="503" y="548.4" width="18" height="14.2" fill="#408000"/><rect x="522" y="548.4" width="17" height="14.2" fill="#208000"/><rect x="540" y="548.4" width="18" height="14.2" fill="#008000"/><rect x="559" y="548.4" width="18" height="14.2" fill="#008020"/><rect x="578" y="548.4" width="17" height="14.2" fill="#008040"/><rect x="596" y="548.4" width="18" height="14.2" fill="#008060"/><rect x="615" y="548.4" width="17" height="14.2" fill="#008080"/><rect x="633" y="548.4" width="18" height="14.2" fill="#006080"/><rect x="652" y="548.4" width="17" height="14.2" fill="#004080"/><rect x="670" y="548.4" width="18" height="14.2" fill="#002080"/><rect x="689" y="548.4" width="17" height="14.2" fill="#000080"/><rect x="707" y="548.4" width="18" height="14.2" fill="#200080"/><rect x="726" y="548.4" width="17" height="14.2" fill="#400080"/><rect x="744" y="548.4" width="18" height="14.2" fill="#600080"/><rect x="763" y="548.4" width="18" height="14.2" fill="#800080"/><rect x="782" y="548.4" width="17" height="14.2" fill="#800060"/><rect x="800" y="548.4" width="18" height="14.2" fill="#800040"/><rect x="819" y="548.4" width="17" height="14.2" fill="#800020"/><rect x="392" y="563.6" width="18" height="14.2" fill="#b00000"/><rect x="411" y="563.6" width="17" height="14.2" fill="#b02b00"/><rect x="429" y="563.6" width="18" height="14.2" fill="#b05800"/><rect x="448" y="563.6" width="17" height="14.2" fill="#b08400"/><rect x="466" y="563.6" width="18" height="14.2" fill="#b0b000"/><rect x="485" y="563.6" width="17" height="14.2" fill="#84b000"/><rect x="503" y="563.6" width="18" height="14.2" fill="#58b000"/><rect x="522" y="563.6" width="17" height="14.2" fill="#2bb000"/><rect x="540" y="563.6" width="18" height="14.2" fill="#00b000"/><rect x="559" y="563.6" width="18" height="14.2" fill="#00b02b"/><rect x="578" y="563.6" width="17" height="14.2" fill="#00b058"/><rect x="596" y="563.6" width="18" height="14.2" fill="#00b084"/><rect x="615" y="563.6" width="17" height="14.2" fill="#00b0b0"/><rect x="633" y="563.6" width="18" height="14.2" fill="#0084b0"/><rect x="652" y="563.6" width="17" height="14.2" fill="#0058b0"/><rect x="670" y="563.6" width="18" height="14.2" fill="#002bb0"/><rect x="689" y="563.6" width="17" height="14.2" fill="#0000b0"/><rect x="707" y="563.6" width="18" height="14.2" fill="#2b00b0"/><rect x="726" y="563.6" width="17" height="14.2" fill="#5800b0"/><rect x="744" y="563.6" width="18" height="14.2" fill="#8400b0"/><rect x="763" y="563.6" width="18" height="14.2" fill="#b000b0"/><rect x="782" y="563.6" width="17" height="14.2" fill="#b00084"/><rect x="800" y="563.6" width="18" height="14.2" fill="#b00058"/><rect x="819" y="563.6" width="17" height="14.2" fill="#b0002b"/><rect x="392" y="578.8" width="18" height="14.2" fill="#ff0000"/><rect x="411" y="578.8" width="17" height="14.2" fill="#ff3f00"/><rect x="429" y="578.8" width="18" height="14.2" fill="#ff7f00"/><rect x="448" y="578.8" width="17" height="14.2" fill="#ffbf00"/><rect x="466" y="578.8" width="18" height="14.2" fill="#ffff00"/><rect x="485" y="578.8" width="17" height="14.2" fill="#bfff00"/><rect x="503" y="578.8" width="18" height="14.2" fill="#7fff00"/><rect x="522" y="578.8" width="17" height="14.2" fill="#3fff00"/><rect x="540" y="578.8" width="18" height="14.2" fill="#00ff00"/><rect x="559" y="578.8" width="18" height="14.2" fill="#00ff3f"/><rect x="578" y="578.8" width="17" height="14.2" fill="#00ff7f"/><rect x="596" y="578.8" width="18" height="14.2" fill="#00ffbf"/><rect x="615" y="578.8" width="17" height="14.2" fill="#00ffff"/><rect x="633" y="578.8" width="18" height="14.2" fill="#00bfff"/><rect x="652" y="578.8" width="17" height="14.2" fill="#007fff"/><rect x="670" y="578.8" width="18" height="14.2" fill="#003fff"/><rect x="689" y="578.8" width="17" height="14.2" fill="#0000ff"/><rect x="707" y="578.8" width="18" height="14.2" fill="#3f00ff"/><rect x="726" y="578.8" width="17" height="14.2" fill="#7f00ff"/><rect x="744" y="578.8" width="18" height="14.2" fill="#bf00ff"/><rect x="763" y="578.8" width="18" height="14.2" fill="#ff00ff"/><rect x="782" y="578.8" width="17" height="14.2" fill="#ff00bf"/><rect x="800" y="578.8" width="18" height="14.2" fill="#ff007f"/><rect x="819" y="578.8" width="17" height="14.2" fill="#ff003f"/><rect x="392" y="602.0" width="18" height="14.2" fill="#ff8080"/><rect x="411" y="602.0" width="17" height="14.2" fill="#ff9f80"/><rect x="429" y="602.0" width="18" height="14.2" fill="#ffbf80"/><rect x="448" y="602.0" width="17" height="14.2" fill="#ffdf80"/><rect x="466" y="602.0" width="18" height="14.2" fill="#ffff80"/><rect x="485" y="602.0" width="17" height="14.2" fill="#dfff80"/><rect x="503" y="602.0" width="18" height="14.2" fill="#bfff80"/><rect x="522" y="602.0" width="17" height="14.2" fill="#9fff80"/><rect x="540" y="602.0" width="18" height="14.2" fill="#80ff80"/><rect x="559" y="602.0" width="18" height="14.2" fill="#80ff9f"/><rect x="578" y="602.0" width="17" height="14.2" fill="#80ffbf"/><rect x="596" y="602.0" width="18" height="14.2" fill="#80ffdf"/><rect x="615" y="602.0" width="17" height="14.2" fill="#80ffff"/><rect x="633" y="602.0" width="18" height="14.2" fill="#80dfff"/><rect x="652" y="602.0" width="17" height="14.2" fill="#80bfff"/><rect x="670" y="602.0" width="18" height="14.2" fill="#809fff"/><rect x="689" y="602.0" width="17" height="14.2" fill="#8080ff"/><rect x="707" y="602.0" width="18" height="14.2" fill="#9f80ff"/><rect x="726" y="602.0" width="17" height="14.2" fill="#bf80ff"/><rect x="744" y="602.0" width="18" height="14.2" fill="#df80ff"/><rect x="763" y="602.0" width="18" height="14.2" fill="#ff80ff"/><rect x="782" y="602.0" width="17" height="14.2" fill="#ff80df"/><rect x="800" y="602.0" width="18" height="14.2" fill="#ff80bf"/><rect x="819" y="602.0" width="17" height="14.2" fill="#ff809f"/><rect x="392" y="617.2" width="18" height="14.2" fill="#a35252"/><rect x="411" y="617.2" width="17" height="14.2" fill="#a36652"/><rect x="429" y="617.2" width="18" height="14.2" fill="#a37a52"/><rect x="448" y="617.2" width="17" height="14.2" fill="#a38f52"/><rect x="466" y="617.2" width="18" height="14.2" fill="#a3a352"/><rect x="485" y="617.2" width="17" height="14.2" fill="#8fa352"/><rect x="503" y="617.2" width="18" height="14.2" fill="#7aa352"/><rect x="522" y="617.2" width="17" height="14.2" fill="#66a352"/><rect x="540" y="617.2" width="18" height="14.2" fill="#52a352"/><rect x="559" y="617.2" width="18" height="14.2" fill="#52a366"/><rect x="578" y="617.2" width="17" height="14.2" fill="#52a37a"/><rect x="596" y="617.2" width="18" height="14.2" fill="#52a38f"/><rect x="615" y="617.2" width="17" height="14.2" fill="#52a3a3"/><rect x="633" y="617.2" width="18" height="14.2" fill="#528fa3"/><rect x="652" y="617.2" width="17" height="14.2" fill="#527aa3"/><rect x="670" y="617.2" width="18" height="14.2" fill="#5266a3"/><rect x="689" y="617.2" width="17" height="14.2" fill="#5252a3"/><rect x="707" y="617.2" width="18" height="14.2" fill="#6652a3"/><rect x="726" y="617.2" width="17" height="14.2" fill="#7a52a3"/><rect x="744" y="617.2" width="18" height="14.2" fill="#8f52a3"/><rect x="763" y="617.2" width="18" height="14.2" fill="#a352a3"/><rect x="782" y="617.2" width="17" height="14.2" fill="#a3528f"/><rect x="800" y="617.2" width="18" height="14.2" fill="#a3527a"/><rect x="819" y="617.2" width="17" height="14.2" fill="#a35266"/><rect x="392" y="632.4" width="18" height="14.2" fill="#7d3e3e"/><rect x="411" y="632.4" width="17" height="14.2" fill="#7d4e3e"/><rect x="429" y="632.4" width="18" height="14.2" fill="#7d5e3e"/><rect x="448" y="632.4" width="17" height="14.2" fill="#7d6d3e"/><rect x="466" y="632.4" width="18" height="14.2" fill="#7d7d3e"/><rect x="485" y="632.4" width="17" height="14.2" fill="#6d7d3e"/><rect x="503" y="632.4" width="18" height="14.2" fill="#5e7d3e"/><rect x="522" y="632.4" width="17" height="14.2" fill="#4e7d3e"/><rect x="540" y="632.4" width="18" height="14.2" fill="#3e7d3e"/><rect x="559" y="632.4" width="18" height="14.2" fill="#3e7d4e"/><rect x="578" y="632.4" width="17" height="14.2" fill="#3e7d5e"/><rect x="596" y="632.4" width="18" height="14.2" fill="#3e7d6d"/><rect x="615" y="632.4" width="17" height="14.2" fill="#3e7d7d"/><rect x="633" y="632.4" width="18" height="14.2" fill="#3e6d7d"/><rect x="652" y="632.4" width="17" height="14.2" fill="#3e5e7d"/><rect x="670" y="632.4" width="18" height="14.2" fill="#3e4e7d"/><rect x="689" y="632.4" width="17" height="14.2" fill="#3e3e7d"/><rect x="707" y="632.4" width="18" height="14.2" fill="#4e3e7d"/><rect x="726" y="632.4" width="17" height="14.2" fill="#5e3e7d"/><rect x="744" y="632.4" width="18" height="14.2" fill="#6d3e7d"/><rect x="763" y="632.4" width="18" height="14.2" fill="#7d3e7d"/><rect x="782" y="632.4" width="17" height="14.2" fill="#7d3e6d"/><rect x="800" y="632.4" width="18" height="14.2" fill="#7d3e5e"/><rect x="819" y="632.4" width="17" height="14.2" fill="#7d3e4e"/><rect x="392" y="647.6" width="18" height="14.2" fill="#8b2525"/><rect x="411" y="647.6" width="17" height="14.2" fill="#7d2820"/><rect x="429" y="647.6" width="18" height="14.2" fill="#8a3525"/><rect x="448" y="647.6" width="17" height="14.2" fill="#8a4a25"/><rect x="466" y="647.6" width="18" height="14.2" fill="#8a8a20"/><rect x="485" y="647.6" width="17" height="14.2" fill="#3a8a2a"/><rect x="503" y="647.6" width="18" height="14.2" fill="#2f8a2f"/><rect x="522" y="647.6" width="17" height="14.2" fill="#2f8a2f"/><rect x="540" y="647.6" width="18" height="14.2" fill="#2a8a2a"/><rect x="559" y="647.6" width="18" height="14.2" fill="#2a8a30"/><rect x="578" y="647.6" width="17" height="14.2" fill="#2a8a35"/><rect x="596" y="647.6" width="18" height="14.2" fill="#2a8a3a"/><rect x="615" y="647.6" width="17" height="14.2" fill="#208585"/><rect x="633" y="647.6" width="18" height="14.2" fill="#2a4a8a"/><rect x="652" y="647.6" width="17" height="14.2" fill="#2a3a85"/><rect x="670" y="647.6" width="18" height="14.2" fill="#2a3080"/><rect x="689" y="647.6" width="17" height="14.2" fill="#2a2a80"/><rect x="707" y="647.6" width="18" height="14.2" fill="#302a85"/><rect x="726" y="647.6" width="17" height="14.2" fill="#352a85"/><rect x="744" y="647.6" width="18" height="14.2" fill="#3a2a85"/><rect x="763" y="647.6" width="18" height="14.2" fill="#802a80"/><rect x="782" y="647.6" width="17" height="14.2" fill="#802535"/><rect x="800" y="647.6" width="18" height="14.2" fill="#80252a"/><rect x="819" y="647.6" width="17" height="14.2" fill="#802a2a"/><rect x="392" y="662.8" width="18" height="14.2" fill="#1f0f0f"/><rect x="411" y="662.8" width="17" height="14.2" fill="#1f130f"/><rect x="429" y="662.8" width="18" height="14.2" fill="#1f170f"/><rect x="448" y="662.8" width="17" height="14.2" fill="#1f1b0f"/><rect x="466" y="662.8" width="18" height="14.2" fill="#1f1f0f"/><rect x="485" y="662.8" width="17" height="14.2" fill="#1b1f0f"/><rect x="503" y="662.8" width="18" height="14.2" fill="#171f0f"/><rect x="522" y="662.8" width="17" height="14.2" fill="#131f0f"/><rect x="540" y="662.8" width="18" height="14.2" fill="#0f1f0f"/><rect x="559" y="662.8" width="18" height="14.2" fill="#0f1f13"/><rect x="578" y="662.8" width="17" height="14.2" fill="#0f1f17"/><rect x="596" y="662.8" width="18" height="14.2" fill="#0f1f1b"/><rect x="615" y="662.8" width="17" height="14.2" fill="#0f1f1f"/><rect x="633" y="662.8" width="18" height="14.2" fill="#0f1b1f"/><rect x="652" y="662.8" width="17" height="14.2" fill="#0f171f"/><rect x="670" y="662.8" width="18" height="14.2" fill="#0f131f"/><rect x="689" y="662.8" width="17" height="14.2" fill="#0f0f1f"/><rect x="707" y="662.8" width="18" height="14.2" fill="#130f1f"/><rect x="726" y="662.8" width="17" height="14.2" fill="#170f1f"/><rect x="744" y="662.8" width="18" height="14.2" fill="#1b0f1f"/><rect x="763" y="662.8" width="18" height="14.2" fill="#1f0f1f"/><rect x="782" y="662.8" width="17" height="14.2" fill="#1f0f1b"/><rect x="800" y="662.8" width="18" height="14.2" fill="#1f0f17"/><rect x="819" y="662.8" width="17" height="14.2" fill="#1f0f13"/></svg>
<div class="abs" style="left:390px;top:708px;width:224px;height:31px;background:#f0f0f0;"></div>
<div class="abs" style="left:394px;top:712px;width:23px;height:24px;background:#ff0000;"></div>
<div class="abs" style="left:418px;top:712px;width:23px;height:24px;background:#ffff00;"></div>
<div class="abs" style="left:442px;top:712px;width:23px;height:24px;background:#00ff00;"></div>
<div class="abs" style="left:466px;top:712px;width:23px;height:24px;background:#00ffff;"></div>
<div class="abs" style="left:490px;top:712px;width:23px;height:24px;background:#0000ff;"></div>
<div class="abs" style="left:514px;top:712px;width:23px;height:24px;background:#ff00ff;"></div>
<div class="abs" style="left:538px;top:712px;width:23px;height:24px;background:#ffffff;"></div>
<div class="abs" style="left:562px;top:712px;width:23px;height:24px;background:#808080;"></div>
<div class="abs" style="left:586px;top:712px;width:23px;height:24px;background:#c0c0c0;"></div>
<div class="abs" style="left:390px;top:740px;width:152px;height:31px;background:#f0f0f0;"></div>
<div class="abs" style="left:394px;top:744px;width:23px;height:24px;background:#000000;"></div>
<div class="abs" style="left:418px;top:744px;width:23px;height:24px;background:#6a6a6a;"></div>
<div class="abs" style="left:442px;top:744px;width:20px;height:24px;background:#6a6a6a;"></div>
<div class="abs" style="left:466px;top:744px;width:23px;height:24px;background:#989898;"></div>
<div class="abs" style="left:493px;top:744px;width:20px;height:24px;background:#c8c8c8;"></div>
<div class="abs" style="left:513px;top:744px;width:24px;height:24px;background:#ffffff;"></div>
<div class="abs" style="left:463px;top:741px;width:29px;height:30px;background:transparent;border:2px solid #000"></div>
<div class="abs" style="left:465px;top:743px;width:25px;height:26px;background:#989898;border:1px solid #fff"></div>
<div class="abs" style="left:633px;top:711px;width:96px;height:24px;background:#cccccc;"></div>
<div class="abs" style="left:735px;top:711px;width:96px;height:24px;background:#cccccc;"></div>
<div class="t" style="left:633px;top:716px;width:96px;text-align:center;font-size:13px;color:#838383">By<u>L</u>ayer</div>
<div class="t" style="left:735px;top:716px;width:96px;text-align:center;font-size:13px;color:#838383">ByBloc<u>k</u></div>
<div class="abs" style="left:766px;top:748px;width:42px;height:42px;background:#ffffff;border:1px solid #8c8c8c"></div>
<div class="abs" style="left:722px;top:762px;width:70px;height:64px;background:#ffffff;border:1px solid #8c8c8c"></div>
<div class="abs" style="left:724px;top:764px;width:66px;height:60px;background:#999999;"></div>
<div class="t" style="left:394px;top:784.2px;font-size:13px;color:#000;">Color:</div>
<div class="abs" style="left:394px;top:800px;width:252px;height:24px;background:#ffffff;border:1px solid #3d86c6"></div>
<div class="abs" style="left:397px;top:803px;width:22px;height:16px;background:#0078d7;"></div>
<div class="t" style="left:398px;top:805.2px;font-size:13px;color:#fff;">253</div>
<div class="abs" style="left:533px;top:852px;width:98px;height:26px;background:#e1e1e1;border:2px solid #0078d7"></div>
<div class="abs" style="left:637px;top:852px;width:98px;height:26px;background:#e1e1e1;border:1px solid #adadad"></div>
<div class="abs" style="left:741px;top:852px;width:98px;height:26px;background:#e1e1e1;border:1px solid #adadad"></div>
<div class="t" style="left:533px;top:859px;width:98px;text-align:center;font-size:13.5px;color:#000">OK</div>
<div class="t" style="left:637px;top:859px;width:98px;text-align:center;font-size:13.5px;color:#000">Cancel</div>
<div class="t" style="left:741px;top:859px;width:98px;text-align:center;font-size:13.5px;color:#000"><u>H</u>elp</div>
</body></html>
